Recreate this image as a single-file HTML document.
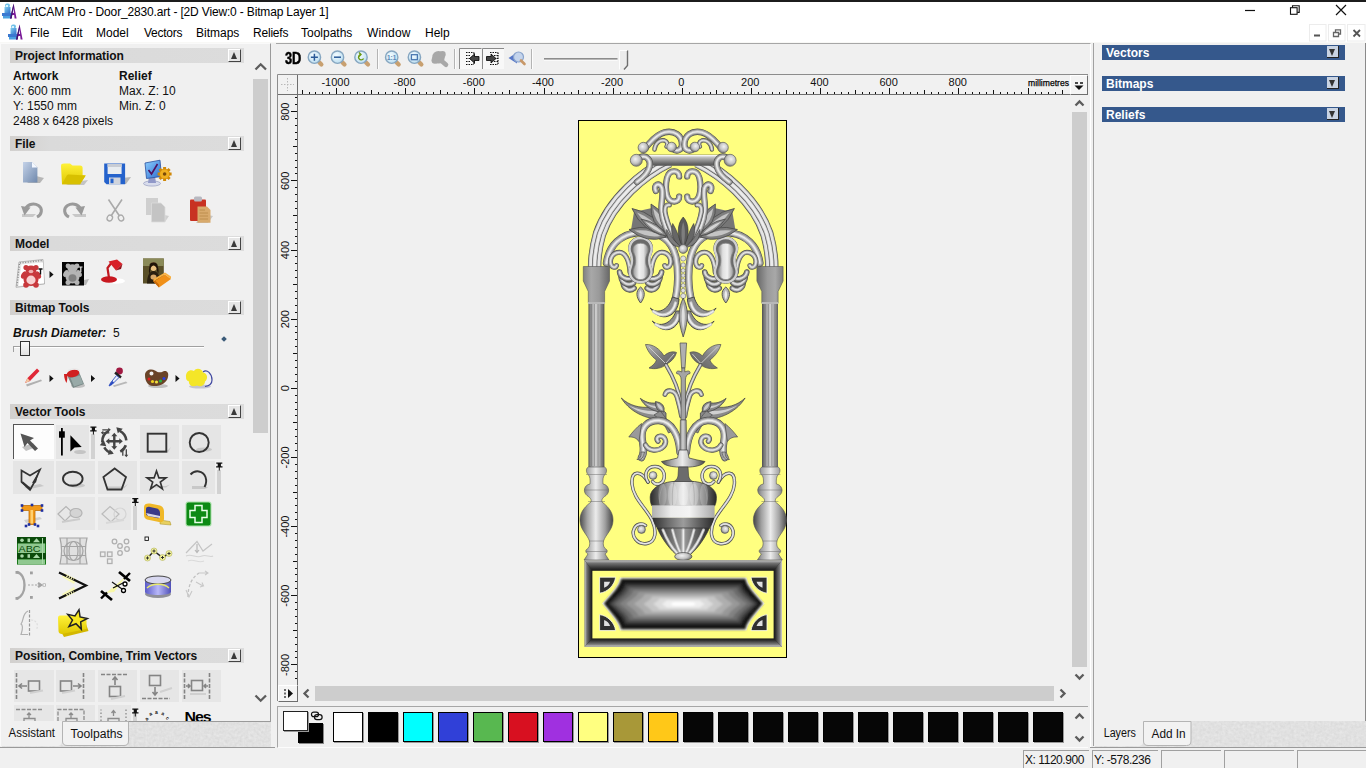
<!DOCTYPE html>
<html>
<head>
<meta charset="utf-8">
<title>ArtCAM Pro - Door_2830.art</title>
<style>
html,body{margin:0;padding:0;}
body{width:1366px;height:768px;overflow:hidden;background:#f0f0f0;position:relative;font-family:"Liberation Sans",Arial,sans-serif;font-size:12px;color:#111;}
.abs{position:absolute;}
svg{position:absolute;overflow:visible;}
#topline{left:0;top:0;width:1366px;height:2px;background:#1c1c1c;}
#titlebar{left:0;top:2px;width:1366px;height:21px;background:#fff;}
#menubar{left:0;top:23px;width:1366px;height:20px;background:#fff;}
.title{left:23px;top:5px;font-size:12px;letter-spacing:-0.16px;color:#000;white-space:pre;}
.menu{top:26px;font-size:12px;color:#000;white-space:pre;}
/* left panel */
#leftpanel{left:0;top:43px;width:271px;height:703px;background:#f0f0f0;border-right:1px solid #9a9a9a;border-top:1px solid #fafafa;border-left:1px solid #fafafa;box-sizing:border-box;}
.sechead{left:10px;width:234px;height:15px;background:linear-gradient(90deg,#d2d0ce 0,#dadada 40px,#dcdcdc 100%);}
.sechead b{position:absolute;left:5px;top:1px;letter-spacing:-0.06px;font-size:12px;line-height:14px;color:#111;white-space:pre;}
.sechead i{position:absolute;right:3px;top:1px;width:13px;height:13px;background:#e6e6e6;border-right:1px solid #444;border-bottom:1px solid #444;border-left:1px solid #fff;border-top:1px solid #fff;box-sizing:border-box;}
.sechead i:after{content:"";position:absolute;left:2px;top:2px;border-left:3.5px solid transparent;border-right:3.5px solid transparent;border-bottom:7px solid #3a3a3a;}
.t{white-space:pre;line-height:15px;font-size:12px;color:#111;}
.sb{background:#cdcdcd;}
.chev{stroke:#5c5c5c;stroke-width:2.3;fill:none;}
/* view */
#viewframe{left:276px;top:43px;width:815px;height:704px;background:#f0f0f0;border-top:1px solid #a6a6a6;border-right:1px solid #fff;box-sizing:border-box;}
/* right panel */
#rightpanel{left:1093px;top:43px;width:273px;height:703px;background:#f0f0f0;border-left:1px solid #a0a0a0;box-sizing:border-box;}
.rbar{left:1102px;width:243px;height:15px;background:#35588c;}
.rbar b{position:absolute;left:4px;top:1px;line-height:15px;font-size:12px;color:#fff;}
.rbar i{position:absolute;right:6px;top:1px;width:12px;height:12px;background:#c9d3e2;border-right:1px solid #222;border-bottom:1px solid #222;box-sizing:border-box;}
.rbar i:after{content:"";position:absolute;left:2px;top:3px;border-left:3.5px solid transparent;border-right:3.5px solid transparent;border-top:7px solid #333;}
.sw{top:712px;width:30px;height:30px;border:1px solid #000;box-sizing:border-box;box-shadow:1px 1px 0 #999;}
.stbox{top:750px;height:18px;border-left:1px solid #a0a0a0;border-top:1px solid #a0a0a0;box-sizing:border-box;font-size:12px;line-height:18px;padding-left:1px;white-space:pre;color:#111;letter-spacing:-0.45px;}
.tabbg{background:#dcdcdc;}
</style>
</head>
<body>
<div class="abs" id="titlebar"></div>
<div class="abs" id="menubar"></div>
<div class="abs" id="topline"></div>
<!-- app icons -->
<svg style="left:1.400px;top:3px" width="16" height="17" viewBox="0 0 16 17"><use href="#appicon"/></svg>
<svg width="0" height="0" style="left:0;top:0"><defs>
<linearGradient id="gApp" x1="0" y1="0" x2="1" y2="1"><stop offset="0" stop-color="#7fd0f0"/><stop offset="1" stop-color="#2a68c8"/></linearGradient>
<g id="appicon">
<rect x="4" y="0.5" width="5" height="4" rx="2" fill="#6fc0e8"/>
<rect x="3.5" y="4" width="6" height="7" fill="url(#gApp)"/>
<rect x="1" y="10" width="9" height="3" fill="#3a78d0"/>
<rect x="2" y="13" width="8" height="2.5" fill="#4aa0e0"/>
<rect x="5" y="2" width="2" height="2" fill="#d8f4ff"/>
<path d="M9 15.5 L12.6 0.5 L15.6 15.5 L13.6 15.5 L13.2 12 L11.2 12 L10.8 15.5 Z M11.6 10 L13 10 L12.4 5 Z" fill="#7a1a98" fill-rule="evenodd"/>
<path d="M9 15.5 L12.6 0.5 L12.8 4 L10.6 15.5 Z" fill="#3a1a70"/>
</g></defs></svg>
<svg style="left:6.600px;top:24px" width="16" height="17" viewBox="0 0 16 17"><use href="#appicon"/></svg>
<div class="abs title">ArtCAM Pro - Door_2830.art - [2D View:0 - Bitmap Layer 1]</div>
<div class="abs menu" style="left:30px">File</div>
<div class="abs menu" style="left:62px">Edit</div>
<div class="abs menu" style="left:96px">Model</div>
<div class="abs menu" style="left:144px;letter-spacing:-0.25px">Vectors</div>
<div class="abs menu" style="left:196px">Bitmaps</div>
<div class="abs menu" style="left:253px;letter-spacing:-0.2px">Reliefs</div>
<div class="abs menu" style="left:301px">Toolpaths</div>
<div class="abs menu" style="left:367px;letter-spacing:0.15px">Window</div>
<div class="abs menu" style="left:425px">Help</div>
<!-- window controls -->
<svg style="left:1240px;top:3px" width="126" height="40" viewBox="1240 3 126 40">
<path d="M1245 10.5H1255" stroke="#111" stroke-width="1.2"/>
<rect x="1290.5" y="7.7" width="6.6" height="6.6" fill="#fff" stroke="#111" stroke-width="1.1"/>
<path d="M1292.5 7.5V5.7H1299.2V12.4H1297.3" fill="none" stroke="#111" stroke-width="1.1"/>
<path d="M1336 5L1346 15M1346 5L1336 15" stroke="#111" stroke-width="1.2"/>
<rect x="1309.5" y="24.5" width="16.5" height="16.5" fill="#fff" stroke="#ececec"/>
<rect x="1328.5" y="24.5" width="16.5" height="16.5" fill="#fff" stroke="#ececec"/>
<rect x="1347.5" y="24.5" width="17.5" height="16.5" fill="#fff" stroke="#ececec"/>
<rect x="1314" y="34.5" width="6" height="2" fill="#555"/>
<path d="M1333.5 32.5H1338.5V36.5H1333.5Z M1335.5 32V29.8H1340.5V34H1339" fill="none" stroke="#666" stroke-width="1.3"/>
<path d="M1353.5 30L1360 36.5M1360 30L1353.5 36.5" stroke="#555" stroke-width="1.8"/>
</svg>
<div class="abs" style="left:0;top:42px;width:1366px;height:1px;background:#f8f8f6"></div>
<!-- LEFT PANEL -->
<div class="abs" id="leftpanel"></div>
<div class="abs sechead" style="top:48px"><b>Project Information</b><i></i></div>
<div class="abs t" style="left:13px;top:69px"><b>Artwork</b></div>
<div class="abs t" style="left:119px;top:69px"><b>Relief</b></div>
<div class="abs t" style="left:13px;top:84px">X: 600 mm</div>
<div class="abs t" style="left:119px;top:84px">Max. Z: 10</div>
<div class="abs t" style="left:13px;top:99px">Y: 1550 mm</div>
<div class="abs t" style="left:119px;top:99px">Min. Z: 0</div>
<div class="abs t" style="left:13px;top:114px">2488 x 6428 pixels</div>
<div class="abs sechead" style="top:136px"><b>File</b><i></i></div>
<div class="abs sechead" style="top:236px"><b>Model</b><i></i></div>
<div class="abs sechead" style="top:300px"><b>Bitmap Tools</b><i></i></div>
<div class="abs t" style="left:13px;top:326px"><b><i>Brush Diameter:</i></b>  5</div>
<div class="abs sechead" style="top:404px"><b>Vector Tools</b><i></i></div>
<div class="abs sechead" style="top:648px"><b>Position, Combine, Trim Vectors</b><i></i></div>
<!-- left scrollbar -->
<div class="abs sb" style="left:253px;top:79px;width:15px;height:354px"></div>
<svg style="left:253px;top:58px" width="16" height="16"><path class="chev" d="M2.5 11.5L7.700 6.300L13 11.500"/></svg>
<svg style="left:253px;top:690px" width="16" height="16"><path class="chev" d="M2.500 5.500L7.700 10.700L13 5.500"/></svg>
<!-- LEFT PANEL ICONS -->
<div class="abs" style="left:13px;top:424px;width:41px;height:35px;background:#fdfdfd;border-left:1px solid #555;border-top:1px solid #555;box-sizing:border-box"></div>
<div class="abs" style="left:56px;top:425px;width:33px;height:34px;background:#e5e5e5"></div>
<div class="abs" style="left:91px;top:434px;width:4px;height:25px;background:#d2d2d2"></div>
<div class="abs" style="left:140px;top:425px;width:39px;height:34px;background:#e5e5e5"></div>
<div class="abs" style="left:182px;top:425px;width:39px;height:34px;background:#e5e5e5"></div>
<div class="abs" style="left:13px;top:461px;width:41px;height:33px;background:#e5e5e5"></div>
<div class="abs" style="left:56px;top:461px;width:39px;height:33px;background:#e5e5e5"></div>
<div class="abs" style="left:98px;top:461px;width:39px;height:33px;background:#e5e5e5"></div>
<div class="abs" style="left:140px;top:461px;width:39px;height:33px;background:#e5e5e5"></div>
<div class="abs" style="left:182px;top:461px;width:33px;height:33px;background:#e5e5e5"></div>
<div class="abs" style="left:217px;top:470px;width:4px;height:24px;background:#d2d2d2"></div>
<div class="abs" style="left:56px;top:497px;width:39px;height:33px;background:#e7e7e7"></div>
<div class="abs" style="left:98px;top:497px;width:33px;height:33px;background:#e7e7e7"></div>
<div class="abs" style="left:133px;top:506px;width:4px;height:24px;background:#d2d2d2"></div>
<div class="abs" style="left:14px;top:670px;width:40px;height:32px;background:#e6e6e6"></div>
<div class="abs" style="left:56px;top:670px;width:39px;height:32px;background:#e6e6e6"></div>
<div class="abs" style="left:98px;top:670px;width:39px;height:32px;background:#e6e6e6"></div>
<div class="abs" style="left:140px;top:670px;width:39px;height:32px;background:#e6e6e6"></div>
<div class="abs" style="left:182px;top:670px;width:39px;height:32px;background:#e6e6e6"></div>
<div class="abs" style="left:14px;top:705px;width:40px;height:16px;background:#e6e6e6"></div>
<div class="abs" style="left:56px;top:705px;width:39px;height:16px;background:#e6e6e6"></div>
<div class="abs" style="left:98px;top:705px;width:33px;height:16px;background:#e6e6e6"></div>
<div class="abs" style="left:133px;top:712px;width:4px;height:9px;background:#d2d2d2"></div>
<div class="abs" style="left:13px;top:346px;width:191px;height:1px;background:#a0a0a0"></div>
<div class="abs" style="left:13px;top:347px;width:191px;height:1px;background:#fff"></div>
<div class="abs" style="left:13px;top:346px;width:1px;height:6px;background:#a0a0a0"></div>
<div class="abs" style="left:20px;top:341px;width:10px;height:15px;background:linear-gradient(#fafafa,#e2e2e2);border:1px solid #333;box-sizing:border-box"></div>
<div class="abs" style="left:222px;top:337px;width:4px;height:4px;background:#3a5a78;transform:rotate(45deg)"></div>
<svg style="left:0;top:0" width="280" height="768" viewBox="0 0 280 768" font-family="Liberation Sans, Arial, sans-serif">
<defs>
<linearGradient id="iDoc" x1="0" y1="0" x2="1" y2="1"><stop offset="0" stop-color="#c4d2e8"/><stop offset="1" stop-color="#6f88ac"/></linearGradient>
<linearGradient id="iFold" x1="0" y1="0" x2="0" y2="1"><stop offset="0" stop-color="#fff23a"/><stop offset="1" stop-color="#e0c800"/></linearGradient>
<linearGradient id="iMon" x1="0" y1="0" x2="1" y2="1"><stop offset="0" stop-color="#8fd0ff"/><stop offset="1" stop-color="#2a6ad0"/></linearGradient>
<linearGradient id="iCyl" x1="0" y1="0" x2="1" y2="0"><stop offset="0" stop-color="#5a5ac8"/><stop offset="0.5" stop-color="#b8b8f8"/><stop offset="1" stop-color="#5050b8"/></linearGradient>
<path id="pin" d="M-3 -3.5H3V-2.3H1.6V0.2H3.2V1.4H0.5V4.5H-0.5V1.4H-3.2V0.2H-1.6V-2.3H-3Z" fill="#111"/>
<path id="tri" d="M0 -4L4.5 0L0 4Z" fill="#111"/>
<ellipse id="shd" cx="0" cy="0" rx="9" ry="2.6" fill="#b8b8b8" opacity="0.8"/>
</defs>
<path d="M36 176L44 178L40 183H27Z" fill="#a8a8a8" opacity="0.8"/>
<path d="M23 162H32L37.4 167.6V182.6H23Z" fill="url(#iDoc)"/><path d="M32 162L37.4 167.6H32Z" fill="#f4f8ff"/>
<path d="M70 183L88 180L84 185H66Z" fill="#b0b0b0" opacity="0.7"/>
<path d="M61 166C61 164 62 163.4 64 163.4H70L72.5 165.5H80C82 165.5 82.6 166.5 82.6 168V175L85.7 175.5L80 184.2H62Z" fill="url(#iFold)"/><path d="M62 184.2L66.5 176C67 175 68 174.6 69 174.6L85.7 175.5L80 184.2Z" fill="#d8c000"/>
<path d="M122 178L131 177L126 184H118Z" fill="#a8a8a8" opacity="0.8"/>
<path d="M104.2 163.4H125.1V184.2H106.5L104.2 182Z" fill="#2462cc"/><rect x="107.6" y="164" width="14" height="10" fill="#e8ecf0"/><rect x="107.6" y="164" width="14" height="3" fill="#c8ccd4"/><rect x="109" y="177.5" width="11.5" height="6.7" fill="#d0d4dc"/><rect x="110.5" y="178.6" width="3" height="4.6" fill="#2462cc"/>
<ellipse cx="152" cy="183.5" rx="8.5" ry="2.6" fill="#d8dcec" stroke="#8890b8" stroke-width="0.6"/><path d="M149 176H155L156 183H148Z" fill="#9098c8"/>
<path d="M145 163L160 160.2L161.5 176.5L146.5 178.5Z" fill="url(#iMon)" stroke="#2a50a0" stroke-width="0.8"/><path d="M148.5 170L151.5 174L157.5 164" fill="none" stroke="#501060" stroke-width="1.6"/>
<g transform="translate(164.6 174)"><circle r="5.4" fill="#e8a010"/><path d="M-7 0H7M0 -7V7M-5 -5L5 5M5 -5L-5 5" stroke="#d08808" stroke-width="3"/><circle r="4.6" fill="#f0b020"/><circle r="1.8" fill="#7a4a08"/></g>
<path d="M22 214H36L33 217H22Z" fill="#c8c8c8"/>
<path d="M25.5 211.500C25 205 33 202 38.500 205.500C43 208.500 42 214.500 37 217" fill="none" stroke="#9a9a9a" stroke-width="3"/><path d="M21 206L30.500 207.500L24.500 215.500Z" fill="#9a9a9a"/>
<path d="M72 214H86L86 217H75Z" fill="#c8c8c8"/>
<path d="M80.500 211.500C81 205 73 202 67.500 205.500C63 208.500 64 214.500 69 217" fill="none" stroke="#9a9a9a" stroke-width="3"/><path d="M85 206L75.500 207.500L81.500 215.500Z" fill="#9a9a9a"/>
<path d="M108.500 199.500L119.500 216M122 199.500L111 216" stroke="#aaa" stroke-width="1.6" fill="none"/><ellipse cx="109.800" cy="218" rx="2.600" ry="3" fill="none" stroke="#aaa" stroke-width="1.300" transform="rotate(30 109.800 218)"/><ellipse cx="121" cy="218" rx="2.600" ry="3" fill="none" stroke="#aaa" stroke-width="1.300" transform="rotate(-30 121 218)"/>
<path d="M160 214L169 216L165 222H152Z" fill="#d0d0d0"/>
<rect x="146" y="198" width="12" height="17" fill="#cfcfcf"/><path d="M151.500 203H161L165 207V222H151.500Z" fill="#c4c4c4" stroke="#dcdcdc" stroke-width="0.8"/>
<path d="M203 214L213 216L208 223H196Z" fill="#c8c8c8"/>
<rect x="190" y="199.500" width="16" height="21.500" rx="1" fill="#c83222"/><rect x="194" y="196.500" width="8" height="5" rx="1.500" fill="#b8b8c0"/><path d="M197.500 206.500H207L210.500 210V222.800H197.500Z" fill="#d8aa6c"/><path d="M199.500 210H205M199.500 213H208M199.500 216H208M199.500 219H208" stroke="#b88848" stroke-width="0.8"/>
<path d="M19 262L43 259.500L44.500 284L16 287.300Z" fill="#e8e8e8" stroke="#a8a8a8" stroke-width="0.8"/><path d="M21.500 264.500L43 262.500L44 283L18.500 286Z" fill="#fff"/>
<path d="M20 263L43 260.500" stroke="#888" stroke-width="1.400" stroke-dasharray="1 1.600"/><path d="M19.500 264L17 286" stroke="#888" stroke-width="1.400" stroke-dasharray="1 1.600"/>
<g fill="#c8383c"><circle cx="26" cy="267.500" r="2.600"/><circle cx="36" cy="267.500" r="2.600"/><ellipse cx="31" cy="270" rx="5.400" ry="4.600"/><ellipse cx="31" cy="279" rx="7.600" ry="7"/><ellipse cx="24" cy="275" rx="2.600" ry="4" transform="rotate(30 24 275)"/><ellipse cx="38" cy="275" rx="2.600" ry="4" transform="rotate(-30 38 275)"/><circle cx="26" cy="285" r="2.800"/><circle cx="36" cy="285" r="2.800"/></g><ellipse cx="31" cy="280" rx="4.600" ry="4.400" fill="#f8d0d0"/><ellipse cx="31" cy="271.500" rx="2.400" ry="1.800" fill="#f0b0b0"/>
<path d="M38.500 269H42.500M40.500 269V274.500" stroke="#111" stroke-width="1.400"/>
<use href="#tri" transform="translate(49.500 274.500) scale(0.900)"/>
<path d="M84 280L89 279L86 285H80Z" fill="#b8b8b8"/>
<rect x="62" y="262" width="22" height="23.500" fill="#050505"/>
<g fill="#b4b4b4"><circle cx="68" cy="266" r="2.400"/><circle cx="77" cy="266" r="2.400"/><ellipse cx="72.500" cy="268.500" rx="5" ry="4.200"/><ellipse cx="72.500" cy="277" rx="7" ry="6.400"/><ellipse cx="66" cy="273.500" rx="2.400" ry="3.800" transform="rotate(30 66 273.500)"/><ellipse cx="79" cy="273.500" rx="2.400" ry="3.800" transform="rotate(-30 79 273.500)"/><circle cx="68" cy="282.500" r="2.500"/><circle cx="77" cy="282.500" r="2.500"/></g><ellipse cx="72.500" cy="278" rx="4" ry="3.800" fill="#808080"/>
<path d="M79 267H82.500M80.800 267V272" stroke="#e8e8e8" stroke-width="1.200"/>
<ellipse cx="116" cy="281" rx="9" ry="2.800" fill="#fff"/>
<ellipse cx="109" cy="279.500" rx="8" ry="3.200" fill="#c81820"/><path d="M109 278L107.500 268L112 262" stroke="#c01820" stroke-width="2.200" fill="none"/><path d="M108.500 261.500L117 259.500L122.500 264L116 270.500Z" fill="#d82028"/><path d="M116 270.500L122.500 264L121 269Z" fill="#901018"/>
<rect x="143" y="258.500" width="20.800" height="25" fill="#5a5028"/><path d="M143 258.500H163.800V266H143Z" fill="#8a8a58"/><path d="M147 283.500C147 275 150 271 153.500 271C157 271 160 275 160.500 283.500Z" fill="#2a2010"/><ellipse cx="153.500" cy="266.500" rx="3.600" ry="4.600" fill="#e8c080"/><path d="M149.500 266C149 261 158 261 157.800 266.500C159 270 158.500 273 158 274L156.500 268C155 264.500 152 264.500 150.800 268L149.500 274C148.500 272 149 269 149.500 266Z" fill="#201408"/><ellipse cx="153.500" cy="277" rx="3" ry="2.600" fill="#d8a868"/>
<path d="M153.500 281.500L165 274.500L171 279L159 287.500Z" fill="#f09018"/><path d="M153.500 281.500L159 287.500V284.500L153.500 279Z" fill="#c86808"/><path d="M153.500 279L165 272.500L171 276.500V279L165 274.500L153.500 281.500Z" fill="#f8b040"/>
<path d="M26 384.500L41 379.500L42 381L27 386.500Z" fill="#b0b0b0"/>
<path d="M25 383L27.500 378L37 368.500L39.500 371L30 381Z" fill="#e02838"/><path d="M25 383L27.500 378L30 381Z" fill="#f0c8a0"/>
<use href="#tri" transform="translate(49.500 378.500) scale(0.900)"/>
<ellipse cx="78" cy="385.500" rx="7" ry="2.400" fill="#c0c0c0"/>
<path d="M67 375L79 372L84 384L73 388Z" fill="#7a8a88"/><path d="M70.500 378L80 375.500L83 383.500L74 386.500Z" fill="#98aaa8"/><ellipse cx="73" cy="373.500" rx="6.400" ry="3.600" fill="#d02020" transform="rotate(-14 73 373.500)"/><path d="M64 374C64 378 65.500 381.500 66.500 383C67.500 380 67.500 377 67 374Z" fill="#d02020"/><path d="M68 370.500C72 368 78 368.500 80 371" stroke="#e8e8e8" stroke-width="1" fill="none"/>
<use href="#tri" transform="translate(91 378.500) scale(0.900)"/>
<path d="M113 385.500L126 381.500L127.500 383L114 387Z" fill="#b8b8b8"/>
<circle cx="119.500" cy="371" r="3.400" fill="#a01840"/><path d="M115 372.500L121 377.500" stroke="#222" stroke-width="2.400"/><path d="M116.500 375.500L110.500 383L109 386L112 384.500L119 377.500Z" fill="#e8eef8" stroke="#3050c0" stroke-width="0.900"/><path d="M112.500 381L110.500 383L109 386L112 384.500L114 382.500Z" fill="#2848c0"/>
<ellipse cx="158" cy="386" rx="10" ry="2" fill="#c0c0c0"/>
<path d="M145 375C145 370 151 368 155 370.500C158 372.500 160 373 163 371.500C167 370 169 373 168 377C167 383 160 386.500 153 386C147.500 385.500 145 381 145 375ZM149.500 373.500A2 2 0 1 0 153.500 373.500A2 2 0 1 0 149.500 373.500Z" fill="#6a4428" fill-rule="evenodd"/><circle cx="149" cy="379" r="1.500" fill="#e02020"/><circle cx="152.500" cy="381.500" r="1.600" fill="#f0d020"/><circle cx="156.500" cy="382" r="1.600" fill="#f0e040"/><circle cx="160.500" cy="381" r="1.600" fill="#28b040"/><circle cx="164" cy="378.500" r="1.600" fill="#2840e0"/>
<use href="#tri" transform="translate(175.500 378.500) scale(0.900)"/>
<ellipse cx="200" cy="386.500" rx="11" ry="2" fill="#c4c4d0"/>
<path d="M203 372C207 368.500 212 374 212 380C212 384 208 386 205 386.500" fill="none" stroke="#4048a0" stroke-width="1.200"/>
<path d="M186 377C185.500 372 190 369 194 371C196 367.500 202 368.500 203 372.500C207.500 373 208.500 379 205 381.500C205 385.500 200 387.500 197 385.500C193 387.500 188.500 385.500 189 381.500C186.500 381 186 379 186 377Z" fill="#f4e628"/>
<path d="M22 447L33 443L36 447L26 451Z" fill="#c0c0c0"/>
<path d="M20.500 433.500L34 438L30 440.500L38 448.500L35 451L27.500 443L24.500 447Z" fill="#555"/>
<path d="M61.900 428V455.500" stroke="#000" stroke-width="1.800"/><rect x="59" y="431.300" width="5.800" height="6.400" fill="#000"/>
<ellipse cx="80" cy="452" rx="6" ry="2" fill="#c4c4c4"/><path d="M70.400 435.300V451.600L74.600 447.600L81.700 447Z" fill="#000"/>
<use href="#pin" transform="translate(93.400 430)"/>
<g transform="translate(114.300 441.300)" fill="none" stroke="#444" stroke-width="2.600"><path d="M-5.500 -10.500A12 12 0 0 0 -12 1" /><path d="M12 -1A12 12 0 0 0 5.500 -10.500" /><path d="M-10 6A12 12 0 0 0 -2 11.800"/><path d="M6 10.400A12 12 0 0 0 11.500 4"/></g>
<g transform="translate(114.300 441.300)" fill="#444"><path d="M0 -8.500L3 -5H1.200V-1.200H5V-3L8.500 0L5 3V1.200H1.200V5H3L0 8.500L-3 5H-1.200V1.200H-5V3L-8.500 0L-5 -3V-1.200H-1.200V-5H-3Z"/><path d="M-14.500 4L-10.500 -1L-8 5Z"/><path d="M2 -14L8.500 -12.500L3.500 -8Z"/><path d="M-6.500 13.500L-4.500 8L-0.500 12.500Z"/><path d="M-12 -8.500H-5M-12 -11.500H-5" stroke="#444" stroke-width="1.300"/><path d="M8.500 8V14.500M12 8V14.500" stroke="#444" stroke-width="1.300"/><path d="M-6 -13.500L-3.500 -11.500L-6 -9.500ZM-11 -10.500L-13.500 -8.500L-11 -6.500Z"/><path d="M6.500 9L8.500 6.500L10.500 9ZM10 13.500L12 16L14 13.500Z"/></g>
<path d="M150 450H168L171 447L168 452.500H150Z" fill="#c8c8c8"/><rect x="147.700" y="433.700" width="18.600" height="18" fill="none" stroke="#333" stroke-width="1.900"/>
<ellipse cx="204" cy="449.500" rx="8" ry="2" fill="#c8c8c8"/><circle cx="199.200" cy="442.500" r="9.500" fill="none" stroke="#333" stroke-width="1.900"/>
<path d="M24 487L40 484L44 486L28 489.500Z" fill="#c8c8c8"/>
<path d="M21.500 470.500L30 475.500L40 469.500L34.500 482L30 490L21.500 482Z" fill="none" stroke="#333" stroke-width="1.700" stroke-linejoin="miter"/><path d="M32 483L38.500 472L36 482.500Z" fill="#333"/><path d="M22 482L31 489.500" stroke="#333" stroke-width="2.200"/>
<ellipse cx="77" cy="485.500" rx="8" ry="2" fill="#c8c8c8"/><ellipse cx="72.800" cy="478.800" rx="9.800" ry="7" fill="none" stroke="#333" stroke-width="1.900"/>
<path d="M106 486.500H124L128 484L124 488.500H106Z" fill="#c8c8c8"/><path d="M114.700 468.500L126 477L121.500 489.500H107.500L103.400 477Z" fill="none" stroke="#333" stroke-width="1.800"/>
<path d="M150 486H166L170 484.500L166 487.500H150Z" fill="#c8c8c8"/><path d="M156.500 469.500L159.300 477.500H167.500L160.900 482.300L163.400 490.300L156.500 485.400L149.600 490.300L152.100 482.300L145.500 477.500H153.700Z" fill="none" stroke="#333" stroke-width="1.900" stroke-linejoin="miter" transform="translate(156.500 480.400) scale(0.860) translate(-156.500 -480.400)"/>
<path d="M192 486H205L208 487.500L205 489H192Z" fill="#c8c8c8"/><path d="M190.500 474.500C195 469.500 203 470.500 205.500 477C206.800 481 206 484.500 204.500 487" fill="none" stroke="#333" stroke-width="1.900"/>
<use href="#pin" transform="translate(219.300 466)"/>
<path d="M24 520L40 517L42 519L26 523Z" fill="#d0d0d0"/>
<path d="M22 505.500H42V510.500H35V524.500H29V510.500H22Z" fill="#f09818" stroke="#c07008" stroke-width="0.800"/><path d="M30.500 510H33V523.500H30.500Z" fill="#ffd070"/>
<rect x="20.7" y="504.2" width="2.600" height="2.600" fill="#2030a0"/>
<rect x="40.7" y="504.2" width="2.600" height="2.600" fill="#2030a0"/>
<rect x="20.7" y="509.2" width="2.600" height="2.600" fill="#2030a0"/>
<rect x="40.7" y="509.2" width="2.600" height="2.600" fill="#2030a0"/>
<rect x="27.7" y="523.2" width="2.600" height="2.600" fill="#2030a0"/>
<rect x="33.7" y="523.2" width="2.600" height="2.600" fill="#2030a0"/>
<rect x="30.7" y="503.7" width="2.600" height="2.600" fill="#2030a0"/>
<rect x="24.7" y="524.7" width="2.600" height="2.600" fill="#2030a0"/>
<rect x="36.7" y="524.7" width="2.600" height="2.600" fill="#2030a0"/>
<g stroke="#b4b4b4" fill="none" stroke-width="1.200"><path d="M58 514L66 506.500L73 513L65 521Z"/><ellipse cx="76" cy="513" rx="6" ry="4.500" fill="#d4d4d4"/><path d="M62 522L80 519" stroke="#ccc" stroke-width="2"/></g>
<g stroke="#bcbcbc" fill="none" stroke-width="1.200"><path d="M102 514L110 506.500L119 514L111 522Z"/><ellipse cx="120" cy="514" rx="6" ry="6" stroke="#d4d4d4"/><path d="M106 523L124 520" stroke="#d8d8d8" stroke-width="2"/></g>
<use href="#pin" transform="translate(135.300 501.500)"/>
<path d="M160 520L170 521.500L171 525L160 524Z" fill="#e8d060" stroke="#a89020" stroke-width="0.500"/><path d="M144 507C144 504 147 503 150 503.500L160 505.500C163 506.500 164 509 164 512V519C164 521.500 162 522.500 159 522L147 519.500C145 519 144 517 144 515Z" fill="#f0b828"/><path d="M146 509C146 507 148 506.500 150 507L157 508.500C159 509 160 511 160 513V516C160 518 159 518.500 157 518L148 516C146.500 515.500 146 514.500 146 513Z" fill="#3a3a88"/><path d="M146 513L160 516V518L148 516Z" fill="#d8d8e8"/>
<rect x="185.500" y="501.500" width="26" height="25" rx="2.500" fill="#a8e0a8"/><rect x="186.500" y="502.500" width="24" height="23" rx="2" fill="#0c8a14"/><path d="M195 505.500H202V510.500H207V517.500H202V522.500H195V517.500H190V510.500H195Z" fill="none" stroke="#e8ffe8" stroke-width="1.500"/>
<rect x="17" y="537" width="29" height="27.600" fill="#187818"/><rect x="17" y="537" width="29" height="6.500" fill="#0a4a0a"/><rect x="17" y="553" width="29" height="6" fill="#0a4a0a"/><rect x="18" y="543.500" width="27" height="9.500" fill="#90c890"/><rect x="18" y="559.500" width="27" height="5" fill="#90c890"/><text x="18.500" y="552.300" font-size="9.500" fill="#0a4a0a" textLength="22" lengthAdjust="spacingAndGlyphs">ABC</text><circle cx="22" cy="540.300" r="1.800" fill="#a8d8a8"/><rect x="27.500" y="538.500" width="2.500" height="3.600" fill="#a8d8a8"/><path d="M33 542.300L36.500 538.300L40 542.300Z" fill="#a8d8a8"/><circle cx="22" cy="556" r="1.800" fill="#a8d8a8"/><rect x="27.500" y="554.200" width="2.500" height="3.600" fill="#a8d8a8"/><path d="M33 558L36.500 554L40 558Z" fill="#a8d8a8"/><path d="M42.500 538V564" stroke="#a8d8a8" stroke-width="1"/>
<g fill="none" stroke="#a4a4a4" stroke-width="1.200"><path d="M60 538H87C85 546 85 555 87 564H60C62 555 62 546 60 538Z" fill="#e0e0e0"/><circle cx="73.500" cy="551" r="9.500"/><ellipse cx="73.500" cy="551" rx="4.500" ry="9.500"/><path d="M61 546.500H86M61 555.500H86M67 538V564M80 538V564"/></g>
<g fill="none" stroke="#b0b0b0" stroke-width="1.300"><rect x="100.500" y="552" width="4.500" height="4.500"/><rect x="107.500" y="552" width="4.500" height="4.500"/><rect x="107.500" y="559" width="4.500" height="4.500"/><circle cx="114.500" cy="541.500" r="2.300"/><circle cx="120" cy="546" r="2.300"/><circle cx="126.500" cy="541.500" r="2.300"/><circle cx="120" cy="553" r="2.300"/><circle cx="127" cy="549" r="2.300"/></g>
<rect x="145" y="537" width="3.400" height="3.400" fill="#fff" stroke="#111" stroke-width="0.900"/><path d="M147.500 558L154 551L162.500 557.500L169 553.500" fill="none" stroke="#222" stroke-width="1.500"/><path d="M160 556L162.500 560L165 556Z" fill="#222"/>
<circle cx="147.5" cy="558" r="3" fill="#f4f4a0" stroke="#a0a040" stroke-width="0.500"/><path d="M145.9 558H149.1M147.5 556.4V559.6" stroke="#222" stroke-width="0.900"/>
<circle cx="154" cy="551" r="3" fill="#f4f4a0" stroke="#a0a040" stroke-width="0.500"/><path d="M152.4 551H155.6M154 549.4V552.6" stroke="#222" stroke-width="0.900"/>
<circle cx="162.5" cy="557.5" r="3" fill="#f4f4a0" stroke="#a0a040" stroke-width="0.500"/><path d="M160.9 557.5H164.1M162.5 555.9V559.1" stroke="#222" stroke-width="0.900"/>
<circle cx="169" cy="553.5" r="3" fill="#f4f4a0" stroke="#a0a040" stroke-width="0.500"/><path d="M167.4 553.5H170.6M169 551.9V555.1" stroke="#222" stroke-width="0.900"/>
<g fill="none" stroke="#c4c4c4" stroke-width="1.200"><path d="M186 553L197 541.500L203 551L212 544"/><path d="M186 556C192 553 196 559 202 556C206 554 210 558 213 556" stroke="#d4d4d4"/><path d="M188 561C194 558 198 564 204 561" stroke="#dadada"/><path d="M197 544V552M195 550L197 552.500L199 550" stroke="#b8b8b8"/></g>
<g fill="none" stroke="#a4a4a4" stroke-width="2.400"><path d="M17 572C27 575 27 595 17 598.500"/><path d="M28 585H40" stroke-width="1" stroke-dasharray="2 1.500"/><path d="M38 583L41 585L38 587"/></g><g fill="#a0a0a0"><rect x="15.500" y="571" width="2.800" height="2.800"/><rect x="15.500" y="597" width="2.800" height="2.800"/><rect x="30" y="571.500" width="2.800" height="2.800"/><rect x="30" y="596" width="2.800" height="2.800"/><rect x="43" y="583.800" width="2.400" height="2.400" fill="#fff" stroke="#a0a0a0" stroke-width="0.700"/></g>
<path d="M64 573L76 579L74 584L62 577ZM64 598L76 592L74 587L62 594Z" fill="#fafab4" opacity="0.900"/><path d="M59 572.500L86 585.500L59 598.500" fill="none" stroke="#111" stroke-width="2.200"/><path d="M66.500 576L73.500 579.500M66.500 595L73.500 591.500" stroke="#fafab8" stroke-width="2.400" stroke-dasharray="1.200 1.200"/>
<path d="M106 593L124 578L128 574L114 592Z" fill="#f8f8a8"/><path d="M101 591L112 600M119 572L130 581" stroke="#000" stroke-width="2.800"/><path d="M101 598.500L107 592.500M124 579L130 573" stroke="#000" stroke-width="2.400"/><path d="M112 582L122 589M113 588L123 583" stroke="#111" stroke-width="1.200"/><circle cx="123.500" cy="590.500" r="2" fill="#fff" stroke="#000" stroke-width="1.300"/><circle cx="125" cy="584" r="2" fill="#fff" stroke="#000" stroke-width="1.300"/>
<ellipse cx="158" cy="594" rx="13" ry="4" fill="#909098"/><path d="M145 580V592C145 596 171 596 171 592V580Z" fill="url(#iCyl)"/><ellipse cx="158" cy="580" rx="13" ry="4" fill="#d8d8f0" stroke="#444" stroke-width="1"/><path d="M147 588C152 583 164 583 169 588" fill="none" stroke="#e8e870" stroke-width="1.400"/>
<g fill="none" stroke="#c0c0c0" stroke-width="1.300" stroke-dasharray="3 2"><path d="M188 597C188 585 192 578 199 573"/></g><g fill="none" stroke="#c8c8c8" stroke-width="1.100"><path d="M199 573H208M205 571L208 573L205 575"/><path d="M196 582L203 586M200 587L203.500 586L202 582.500"/><path d="M186 590L189 597L192 591"/></g>
<g fill="none" stroke="#b0b0b0" stroke-width="1.200"><path d="M28 611C22 614 24 620 21 624C24 626 22 631 21 634.500H28"/><path d="M29.500 610V636" stroke-dasharray="3 1.500" stroke="#999"/><path d="M31 620C37 620 39 626 36 630" stroke="#dcdcdc" stroke-dasharray="2 1.500"/></g>
<path d="M60 630L86 624L88.500 631L64 637Z" fill="#d4b800"/><path d="M58 618C58 616 59 615.500 61 615.500H68L70 618H84C86 618 86.500 619 86.500 621V629L62 634C60 634 58.500 633 58.500 631Z" fill="url(#iFold)"/><path d="M77 609.500L79.600 616.400H87L81.200 621L83.300 628L77 623.800L70.700 628L72.800 621L67 616.400H74.400Z" fill="#f8e820" stroke="#222" stroke-width="1.500" stroke-linejoin="miter" transform="rotate(12 77 619)"/>
<g fill="none" stroke="#848484" stroke-width="1.600"><path d="M16.500 673V700" stroke-dasharray="4 1.500"/><rect x="28.500" y="681" width="11" height="10"/><path d="M19 686H27M22 683.500L19 686L22 688.500" /><path d="M30 693L43 690.500" stroke="#d0d0d0" stroke-width="2"/></g>
<g fill="none" stroke="#848484" stroke-width="1.600"><path d="M83.500 673V700" stroke-dasharray="4 1.500"/><rect x="60.500" y="681" width="11" height="10"/><path d="M73 686H81M78 683.500L81 686L78 688.500"/><path d="M62 693L75 690.500" stroke="#d0d0d0" stroke-width="2"/></g>
<g fill="none" stroke="#848484" stroke-width="1.600"><path d="M101 674.500H127" stroke-dasharray="4 1.500"/><rect x="109.500" y="686.500" width="11" height="10"/><path d="M115 677V685M112.500 680L115 677L117.500 680"/><path d="M111 699L125 696" stroke="#d0d0d0" stroke-width="2"/></g>
<g fill="none" stroke="#848484" stroke-width="1.600"><path d="M142 698.500H170" stroke-dasharray="4 1.500"/><rect x="149.500" y="675.500" width="11" height="10"/><path d="M155 687V695M152.500 692L155 695L157.500 692"/><path d="M160 692L172 688" stroke="#d0d0d0" stroke-width="2"/></g>
<g fill="none" stroke="#848484" stroke-width="1.600"><path d="M184.500 673V700M209.500 673V700" stroke-dasharray="4 1.500"/><rect x="191.500" y="680.500" width="11" height="10"/><path d="M186 686H190M188 684L190 686L188 688M208 686H204M206 684L204 686L206 688"/><path d="M190 694H206" stroke="#d0d0d0" stroke-width="2"/></g>
<g fill="none" stroke="#8c8c8c" stroke-width="1.300"><path d="M16 709.500H42" stroke-dasharray="4 1.500"/><path d="M29 713V718M27 715L29 713L31 715"/><path d="M24 721V718.500H35V721"/><path d="M58 721V709.500H84V721" stroke-dasharray="4 1.500"/><path d="M71 713V718M69 715L71 713L73 715"/><path d="M66 721V718.500H77V721"/><path d="M101 721V709.500M126 709.500V721" stroke-dasharray="1.500 2"/><path d="M113.500 710.500V716M111.500 713L113.500 710.500L115.500 713"/><path d="M108 721V718.500H119V721"/></g>
<use href="#pin" transform="translate(135.300 712)"/>
<g font-size="5" fill="#111" font-weight="bold"><text x="147" y="721" transform="rotate(-50 147 721)">a</text><text x="150" y="716" transform="rotate(-25 150 716)">a</text><text x="155" y="713.500">a</text><text x="161" y="714.500" transform="rotate(25 161 714.500)">a</text><text x="165.500" y="718" transform="rotate(55 165.500 718)">c</text></g>
<text x="184.500" y="721.500" font-size="15" font-weight="bold" fill="#000" textLength="26" lengthAdjust="spacingAndGlyphs" letter-spacing="-1">Nes</text>
<rect x="184" y="721" width="30" height="10" fill="#f0f0f0"/>
</svg>
<!-- VIEW -->
<div class="abs" id="viewframe"></div>
<div class="abs" style="left:284.5px;top:51px;font-weight:bold;font-size:16px;line-height:16px;color:#000;transform:scaleX(0.8);transform-origin:0 0;letter-spacing:-0.2px;-webkit-text-stroke:0.5px #000">3D</div>
<svg style="left:0;top:0" width="1366" height="768" viewBox="0 0 1366 768" font-family="Liberation Sans, Arial, sans-serif">
<rect x="277.5" y="74.5" width="793" height="20" fill="#f1f1f1" stroke="none"/>
<path d="M277.5 701V74.5H1088" fill="none" stroke="#8c8c8c" stroke-width="1"/>
<path d="M278 94.5H1070" stroke="#6e6e6e" stroke-width="1"/>
<path d="M297.5 75V685" stroke="#6e6e6e" stroke-width="1"/>
<path d="M302.5 94V90M309.5 94V92M315.5 94V92M322.5 94V92M329.5 94V92M336.5 94V88M343.5 94V92M350.5 94V92M357.5 94V92M364.5 94V92M371.5 94V90M378.5 94V92M385.5 94V92M392.5 94V92M398.5 94V92M405.5 94V88M412.5 94V92M419.5 94V92M426.5 94V92M433.5 94V92M440.5 94V90M447.5 94V92M454.5 94V92M461.5 94V92M468.5 94V92M474.5 94V88M481.5 94V92M488.5 94V92M495.5 94V92M502.5 94V92M509.5 94V90M516.5 94V92M523.5 94V92M530.5 94V92M537.5 94V92M544.5 94V88M551.5 94V92M557.5 94V92M564.5 94V92M571.5 94V92M578.5 94V90M585.5 94V92M592.5 94V92M599.5 94V92M606.5 94V92M613.5 94V88M620.5 94V92M627.5 94V92M634.5 94V92M640.5 94V92M647.5 94V90M654.5 94V92M661.5 94V92M668.5 94V92M675.5 94V92M682.5 94V88M689.5 94V92M696.5 94V92M703.5 94V92M710.5 94V92M716.5 94V90M723.5 94V92M730.5 94V92M737.5 94V92M744.5 94V92M751.5 94V88M758.5 94V92M765.5 94V92M772.5 94V92M779.5 94V92M786.5 94V90M793.5 94V92M799.5 94V92M806.5 94V92M813.5 94V92M820.5 94V88M827.5 94V92M834.5 94V92M841.5 94V92M848.5 94V92M855.5 94V90M862.5 94V92M869.5 94V92M875.5 94V92M882.5 94V92M889.5 94V88M896.5 94V92M903.5 94V92M910.5 94V92M917.5 94V92M924.5 94V90M931.5 94V92M938.5 94V92M945.5 94V92M952.5 94V92M958.5 94V88M965.5 94V92M972.5 94V92M979.5 94V92M986.5 94V92M993.5 94V90M1000.5 94V92M1007.5 94V92M1014.5 94V92M1021.5 94V92M1028.5 94V88M1035.5 94V92M1041.5 94V92M1048.5 94V92M1055.5 94V92M1062.5 94V90" stroke="#111" stroke-width="1" fill="none"/>
<text x="335.5" y="86" font-size="11" text-anchor="middle" fill="#111">-1000</text>
<text x="404.6" y="86" font-size="11" text-anchor="middle" fill="#111">-800</text>
<text x="473.8" y="86" font-size="11" text-anchor="middle" fill="#111">-600</text>
<text x="542.9" y="86" font-size="11" text-anchor="middle" fill="#111">-400</text>
<text x="612.1" y="86" font-size="11" text-anchor="middle" fill="#111">-200</text>
<text x="681.2" y="86" font-size="11" text-anchor="middle" fill="#111">0</text>
<text x="750.3" y="86" font-size="11" text-anchor="middle" fill="#111">200</text>
<text x="819.5" y="86" font-size="11" text-anchor="middle" fill="#111">400</text>
<text x="888.6" y="86" font-size="11" text-anchor="middle" fill="#111">600</text>
<text x="957.8" y="86" font-size="11" text-anchor="middle" fill="#111">800</text>
<text x="1069" y="86" font-size="9" text-anchor="end" fill="#000" stroke="#000" stroke-width="0.25" textLength="41" lengthAdjust="spacingAndGlyphs">millimetres</text>
<path d="M297 678.5H295M297 671.5H295M297 664.5H291M297 657.5H295M297 651.5H295M297 644.5H295M297 637.5H295M297 630.5H293M297 623.5H295M297 616.5H295M297 609.5H295M297 602.5H295M297 595.5H291M297 588.5H295M297 581.5H295M297 574.5H295M297 568.5H295M297 561.5H293M297 554.5H295M297 547.5H295M297 540.5H295M297 533.5H295M297 526.5H291M297 519.5H295M297 512.5H295M297 505.5H295M297 498.5H295M297 492.5H293M297 485.5H295M297 478.5H295M297 471.5H295M297 464.5H295M297 457.5H291M297 450.5H295M297 443.5H295M297 436.5H295M297 429.5H295M297 422.5H293M297 415.5H295M297 409.5H295M297 402.5H295M297 395.5H295M297 388.5H291M297 381.5H295M297 374.5H295M297 367.5H295M297 360.5H295M297 353.5H293M297 346.5H295M297 339.5H295M297 332.5H295M297 326.5H295M297 319.5H291M297 312.5H295M297 305.5H295M297 298.5H295M297 291.5H295M297 284.5H293M297 277.5H295M297 270.5H295M297 263.5H295M297 256.5H295M297 250.5H291M297 243.5H295M297 236.5H295M297 229.5H295M297 222.5H295M297 215.5H293M297 208.5H295M297 201.5H295M297 194.5H295M297 187.5H295M297 180.5H291M297 173.5H295M297 167.5H295M297 160.5H295M297 153.5H295M297 146.5H293M297 139.5H295M297 132.5H295M297 125.5H295M297 118.5H295M297 111.5H291M297 104.5H295M297 97.5H295" stroke="#111" stroke-width="1" fill="none"/>
<text transform="translate(289,664.9) rotate(-90)" font-size="11" text-anchor="middle" fill="#111">-800</text>
<text transform="translate(289,595.7) rotate(-90)" font-size="11" text-anchor="middle" fill="#111">-600</text>
<text transform="translate(289,526.6) rotate(-90)" font-size="11" text-anchor="middle" fill="#111">-400</text>
<text transform="translate(289,457.4) rotate(-90)" font-size="11" text-anchor="middle" fill="#111">-200</text>
<text transform="translate(289,388.3) rotate(-90)" font-size="11" text-anchor="middle" fill="#111">0</text>
<text transform="translate(289,319.2) rotate(-90)" font-size="11" text-anchor="middle" fill="#111">200</text>
<text transform="translate(289,250.0) rotate(-90)" font-size="11" text-anchor="middle" fill="#111">400</text>
<text transform="translate(289,180.9) rotate(-90)" font-size="11" text-anchor="middle" fill="#111">600</text>
<text transform="translate(289,111.7) rotate(-90)" font-size="11" text-anchor="middle" fill="#111">800</text>
<path d="M281 84.5H294M287.5 78V91" stroke="#b8b8b8" stroke-width="1" stroke-dasharray="1.5 1.5"/>
</svg>
<!-- DOOR ARTWORK -->
<svg style="left:0;top:0" width="1366" height="768" viewBox="0 0 1366 768">
<defs>
<linearGradient id="gCol" x1="0" y1="0" x2="1" y2="0"><stop offset="0" stop-color="#5a5a5a"/><stop offset="0.18" stop-color="#9a9a9a"/><stop offset="0.45" stop-color="#d2d2d2"/><stop offset="0.75" stop-color="#a0a0a0"/><stop offset="1" stop-color="#4e4e4e"/></linearGradient>
<linearGradient id="gCap" x1="0" y1="0" x2="1" y2="0"><stop offset="0" stop-color="#808080"/><stop offset="0.3" stop-color="#a8a8a8"/><stop offset="0.6" stop-color="#9a9a9a"/><stop offset="1" stop-color="#686868"/></linearGradient>
<linearGradient id="gBulb" x1="0" y1="0" x2="1" y2="0"><stop offset="0" stop-color="#4c4c4c"/><stop offset="0.22" stop-color="#a4a4a4"/><stop offset="0.48" stop-color="#ececec"/><stop offset="0.76" stop-color="#a0a0a0"/><stop offset="1" stop-color="#444"/></linearGradient>
<linearGradient id="gBar" x1="0" y1="0" x2="0" y2="1"><stop offset="0" stop-color="#e8e8e8"/><stop offset="0.3" stop-color="#b4b4b4"/><stop offset="0.8" stop-color="#6a6a6a"/><stop offset="1" stop-color="#585858"/></linearGradient>
<radialGradient id="gBall" cx="0.42" cy="0.4" r="0.6"><stop offset="0" stop-color="#f2f2f2"/><stop offset="0.6" stop-color="#c4c4c4"/><stop offset="1" stop-color="#7a7a7a"/></radialGradient>
<linearGradient id="gVase" x1="0" y1="0" x2="1" y2="0"><stop offset="0" stop-color="#2a2a2a"/><stop offset="0.16" stop-color="#6a6a6a"/><stop offset="0.32" stop-color="#bcbcbc"/><stop offset="0.5" stop-color="#ececec"/><stop offset="0.68" stop-color="#b8b8b8"/><stop offset="0.85" stop-color="#666"/><stop offset="1" stop-color="#262626"/></linearGradient>
<linearGradient id="gVaseLow" x1="0" y1="0" x2="1" y2="0"><stop offset="0" stop-color="#2e2e2e"/><stop offset="0.25" stop-color="#6a6a6a"/><stop offset="0.5" stop-color="#9c9c9c"/><stop offset="0.75" stop-color="#626262"/><stop offset="1" stop-color="#2a2a2a"/></linearGradient>
<linearGradient id="gBand" x1="0" y1="0" x2="1" y2="0"><stop offset="0" stop-color="#b0b0b0"/><stop offset="0.3" stop-color="#ececec"/><stop offset="0.6" stop-color="#f4f4f4"/><stop offset="1" stop-color="#a8a8a8"/></linearGradient>
<linearGradient id="gKey" x1="0" y1="0" x2="1" y2="0"><stop offset="0" stop-color="#9a9a9a"/><stop offset="0.4" stop-color="#f0f0f0"/><stop offset="0.7" stop-color="#e0e0e0"/><stop offset="1" stop-color="#8c8c8c"/></linearGradient>
<linearGradient id="gLeaf" x1="0" y1="0" x2="1" y2="1"><stop offset="0" stop-color="#b8b8b8"/><stop offset="0.5" stop-color="#7c7c7c"/><stop offset="1" stop-color="#5a5a5a"/></linearGradient>
<radialGradient id="gPlaque" cx="0.5" cy="0.5" r="0.5" gradientTransform="translate(0.5 0.5) scale(1 0.62) translate(-0.5 -0.5)"><stop offset="0" stop-color="#ffffff"/><stop offset="0.3" stop-color="#e4e4e4"/><stop offset="0.65" stop-color="#8e8e8e"/><stop offset="0.9" stop-color="#383838"/><stop offset="1" stop-color="#1c1c1c"/></radialGradient>
<linearGradient id="gFrT" x1="0" y1="0" x2="0" y2="1"><stop offset="0" stop-color="#c8c8c8"/><stop offset="0.3" stop-color="#707070"/><stop offset="0.8" stop-color="#2a2a2a"/><stop offset="1" stop-color="#161616"/></linearGradient>
<linearGradient id="gFrB" x1="0" y1="1" x2="0" y2="0"><stop offset="0" stop-color="#d0d0d0"/><stop offset="0.3" stop-color="#787878"/><stop offset="0.8" stop-color="#2a2a2a"/><stop offset="1" stop-color="#161616"/></linearGradient>
<linearGradient id="gFrL" x1="0" y1="0" x2="1" y2="0"><stop offset="0" stop-color="#c8c8c8"/><stop offset="0.3" stop-color="#707070"/><stop offset="0.8" stop-color="#2a2a2a"/><stop offset="1" stop-color="#161616"/></linearGradient>
<linearGradient id="gFrR" x1="1" y1="0" x2="0" y2="0"><stop offset="0" stop-color="#d0d0d0"/><stop offset="0.3" stop-color="#787878"/><stop offset="0.8" stop-color="#2a2a2a"/><stop offset="1" stop-color="#161616"/></linearGradient>
<filter id="blurP" x="-5%" y="-5%" width="110%" height="110%"><feGaussianBlur stdDeviation="0.9"/></filter>
</defs>
<rect x="578.5" y="120.5" width="208" height="537" fill="#ffff80" stroke="#000" stroke-width="1"/>
<g><path d="M669 161 C644 173 611 200 599.5 234 C595.5 248 594.6 258 594.6 267" fill="none" stroke="#505050" stroke-width="13.4" />
<path d="M669 161 C644 173 611 200 599.5 234 C595.5 248 594.6 258 594.6 267" fill="none" stroke="#b4b4b4" stroke-width="12" />
<path d="M669 161 C644 173 611 200 599.5 234 C595.5 248 594.6 258 594.6 267" fill="none" stroke="#e4e4e4" stroke-width="10.6" />
<path d="M669 161 C644 173 611 200 599.5 234 C595.5 248 594.6 258 594.6 267" fill="none" stroke="#5e5e5e" stroke-width="5.4" />
<path d="M669 161 C644 173 611 200 599.5 234 C595.5 248 594.6 258 594.6 267" fill="none" stroke="#c0c0c0" stroke-width="4.0" />
<path d="M669 161 C644 173 611 200 599.5 234 C595.5 248 594.6 258 594.6 267" fill="none" stroke="#ececec" stroke-width="2.6" /></g>
<g transform="translate(1366.4,0) scale(-1,1)"><path d="M669 161 C644 173 611 200 599.5 234 C595.5 248 594.6 258 594.6 267" fill="none" stroke="#505050" stroke-width="13.4" />
<path d="M669 161 C644 173 611 200 599.5 234 C595.5 248 594.6 258 594.6 267" fill="none" stroke="#b4b4b4" stroke-width="12" />
<path d="M669 161 C644 173 611 200 599.5 234 C595.5 248 594.6 258 594.6 267" fill="none" stroke="#e4e4e4" stroke-width="10.6" />
<path d="M669 161 C644 173 611 200 599.5 234 C595.5 248 594.6 258 594.6 267" fill="none" stroke="#5e5e5e" stroke-width="5.4" />
<path d="M669 161 C644 173 611 200 599.5 234 C595.5 248 594.6 258 594.6 267" fill="none" stroke="#c0c0c0" stroke-width="4.0" />
<path d="M669 161 C644 173 611 200 599.5 234 C595.5 248 594.6 258 594.6 267" fill="none" stroke="#ececec" stroke-width="2.6" /></g>
<path d="M646.9 155H720.3L713.6 165.4H653.5Z" fill="url(#gBar)" stroke="#555" stroke-width="0.6"/>
<path d="M647.5 155.6H719.7" stroke="#f4f4f4" stroke-width="1.2"/>
<g><path d="M640 157.5 C646.5 154.5 651 160 649.5 166.5 C648.5 172 644 177 637 182" fill="none" stroke="#505050" stroke-width="6.40" stroke-linecap="round" stroke-linejoin="round" />
<path d="M640 157.5 C646.5 154.5 651 160 649.5 166.5 C648.5 172 644 177 637 182" fill="none" stroke="#969696" stroke-width="5.20" stroke-linecap="round" stroke-linejoin="round" />
<path d="M640 157.5 C646.5 154.5 651 160 649.5 166.5 C648.5 172 644 177 637 182" fill="none" stroke="#cacaca" stroke-width="2.86" stroke-linecap="round" stroke-linejoin="round" />
<path d="M640 157.5 C646.5 154.5 651 160 649.5 166.5 C648.5 172 644 177 637 182" fill="none" stroke="#eeeeee" stroke-width="1.14" stroke-linecap="round" stroke-linejoin="round" />
<circle cx="636.3" cy="160.3" r="6" fill="url(#gBall)" stroke="#5a5a5a" stroke-width="0.7"/>
<path d="M646 147 C651 142 655 135 664.5 132.3 C674.5 130 682 135.5 682 144.5 C682 150.5 676.5 152 672.5 148.5" fill="none" stroke="#505050" stroke-width="6.40" stroke-linecap="round" stroke-linejoin="round" />
<path d="M646 147 C651 142 655 135 664.5 132.3 C674.5 130 682 135.5 682 144.5 C682 150.5 676.5 152 672.5 148.5" fill="none" stroke="#969696" stroke-width="5.20" stroke-linecap="round" stroke-linejoin="round" />
<path d="M646 147 C651 142 655 135 664.5 132.3 C674.5 130 682 135.5 682 144.5 C682 150.5 676.5 152 672.5 148.5" fill="none" stroke="#cacaca" stroke-width="2.86" stroke-linecap="round" stroke-linejoin="round" />
<path d="M646 147 C651 142 655 135 664.5 132.3 C674.5 130 682 135.5 682 144.5 C682 150.5 676.5 152 672.5 148.5" fill="none" stroke="#eeeeee" stroke-width="1.14" stroke-linecap="round" stroke-linejoin="round" />
<path d="M654.5 149.5 C655 143 660 139.5 664.5 140.5 C667.5 141.5 668 144.5 666.5 146.5" fill="none" stroke="#505050" stroke-width="4.40" stroke-linecap="round" stroke-linejoin="round" />
<path d="M654.5 149.5 C655 143 660 139.5 664.5 140.5 C667.5 141.5 668 144.5 666.5 146.5" fill="none" stroke="#969696" stroke-width="3.20" stroke-linecap="round" stroke-linejoin="round" />
<path d="M654.5 149.5 C655 143 660 139.5 664.5 140.5 C667.5 141.5 668 144.5 666.5 146.5" fill="none" stroke="#cacaca" stroke-width="1.76" stroke-linecap="round" stroke-linejoin="round" />
<path d="M654.5 149.5 C655 143 660 139.5 664.5 140.5 C667.5 141.5 668 144.5 666.5 146.5" fill="none" stroke="#eeeeee" stroke-width="0.70" stroke-linecap="round" stroke-linejoin="round" />
<circle cx="643.4" cy="147.6" r="5.3" fill="url(#gBall)" stroke="#5a5a5a" stroke-width="0.7"/>
<circle cx="671.6" cy="147" r="4.8" fill="url(#gBall)" stroke="#5a5a5a" stroke-width="0.7"/>
<path d="M583.3 266.5H609.5V281L604.6 291.5V303H588.3V291.5L583.3 281Z" fill="url(#gCap)" stroke="#555" stroke-width="0.6"/>
<rect x="588.4" y="303" width="16" height="164" fill="url(#gCol)"/>
<path d="M591.5 304V466M594.6 304V466M598 304V466M601.2 304V466" stroke="#6c6c6c" stroke-width="0.7" opacity="0.7"/>
<rect x="588" y="302" width="16.8" height="2" fill="#b8b8b8"/>
<path d="M588.4 467 H604.4 C607 468 607.3 472 605 474.5 C603 476 602.6 480 603 484 C609 485 610.5 492 606 495.5 C602 498 601.5 500 602 502 C610 508 613.4 514 613 521 C612.5 530 606 534 603.5 541 C602.8 545 603.6 548 606.5 549.5 C608 551 607 553 605 554 L609 560 H584 L588 554 C586 553 585 551 586.5 549.5 C589.4 548 590.2 545 589.5 541 C587 534 580.5 530 580 521 C579.6 514 583 508 591 502 C591.5 500 591 498 587 495.5 C582.5 492 584 485 590 484 C590.4 480 590 476 588 474.5 C585.7 472 586 468 588.4 467Z" fill="url(#gBulb)" stroke="#555" stroke-width="0.6"/>
<path d="M586 474.5H607M584 490H609M588 501.5H605M589 541H604M586 551.5H607" stroke="#6a6a6a" stroke-width="0.8" opacity="0.6"/>
<path d="M606.5 263 C609 246 620 233.5 641 232.2 C660 231.5 672 240 676 258 C678.5 270 678.5 288 674.5 302" fill="none" stroke="#505050" stroke-width="7.40" stroke-linecap="round" stroke-linejoin="round" />
<path d="M606.5 263 C609 246 620 233.5 641 232.2 C660 231.5 672 240 676 258 C678.5 270 678.5 288 674.5 302" fill="none" stroke="#969696" stroke-width="6.20" stroke-linecap="round" stroke-linejoin="round" />
<path d="M606.5 263 C609 246 620 233.5 641 232.2 C660 231.5 672 240 676 258 C678.5 270 678.5 288 674.5 302" fill="none" stroke="#cacaca" stroke-width="3.41" stroke-linecap="round" stroke-linejoin="round" />
<path d="M606.5 263 C609 246 620 233.5 641 232.2 C660 231.5 672 240 676 258 C678.5 270 678.5 288 674.5 302" fill="none" stroke="#eeeeee" stroke-width="1.36" stroke-linecap="round" stroke-linejoin="round" />
<path d="M679 299 C678 318 660 323 650.3 308 C657 314.5 668 311 672.5 297Z" fill="#8e8e8e" stroke="#4a4a4a" stroke-width="1"/>
<path d="M675.5 303 C673 314 663 318.5 653.5 311.5" fill="none" stroke="#c8c8c8" stroke-width="3.2" stroke-linecap="round"/>
<path d="M675.5 303 C673 314 663 318.5 653.5 311.5" fill="none" stroke="#efefef" stroke-width="1.3" stroke-linecap="round"/>
<path d="M681 311 C680 331 663 336 652.3 321 C659 327.5 671 325 676 311Z" fill="#8e8e8e" stroke="#4a4a4a" stroke-width="1"/>
<path d="M678.5 315 C676 326.5 666 331.5 655.8 324.5" fill="none" stroke="#c8c8c8" stroke-width="3.2" stroke-linecap="round"/>
<path d="M678.5 315 C676 326.5 666 331.5 655.8 324.5" fill="none" stroke="#efefef" stroke-width="1.3" stroke-linecap="round"/>
<path d="M630 272.5 C629.5 262 626 252.5 619.5 252.3 C613 252.2 609.3 258.5 610.8 264 C611.8 267.5 615.5 268.5 616.5 265.5" fill="none" stroke="#505050" stroke-width="5.00" stroke-linecap="round" stroke-linejoin="round" />
<path d="M630 272.5 C629.5 262 626 252.5 619.5 252.3 C613 252.2 609.3 258.5 610.8 264 C611.8 267.5 615.5 268.5 616.5 265.5" fill="none" stroke="#969696" stroke-width="3.80" stroke-linecap="round" stroke-linejoin="round" />
<path d="M630 272.5 C629.5 262 626 252.5 619.5 252.3 C613 252.2 609.3 258.5 610.8 264 C611.8 267.5 615.5 268.5 616.5 265.5" fill="none" stroke="#cacaca" stroke-width="2.09" stroke-linecap="round" stroke-linejoin="round" />
<path d="M630 272.5 C629.5 262 626 252.5 619.5 252.3 C613 252.2 609.3 258.5 610.8 264 C611.8 267.5 615.5 268.5 616.5 265.5" fill="none" stroke="#eeeeee" stroke-width="0.84" stroke-linecap="round" stroke-linejoin="round" />
<path d="M651.2 272.5 C651.7 262 655.2 252.5 661.7 252.3 C668.2 252.2 671.9 258.5 670.4 264 C669.4 267.5 665.7 268.5 664.7 265.5" fill="none" stroke="#505050" stroke-width="5.00" stroke-linecap="round" stroke-linejoin="round" />
<path d="M651.2 272.5 C651.7 262 655.2 252.5 661.7 252.3 C668.2 252.2 671.9 258.5 670.4 264 C669.4 267.5 665.7 268.5 664.7 265.5" fill="none" stroke="#969696" stroke-width="3.80" stroke-linecap="round" stroke-linejoin="round" />
<path d="M651.2 272.5 C651.7 262 655.2 252.5 661.7 252.3 C668.2 252.2 671.9 258.5 670.4 264 C669.4 267.5 665.7 268.5 664.7 265.5" fill="none" stroke="#cacaca" stroke-width="2.09" stroke-linecap="round" stroke-linejoin="round" />
<path d="M651.2 272.5 C651.7 262 655.2 252.5 661.7 252.3 C668.2 252.2 671.9 258.5 670.4 264 C669.4 267.5 665.7 268.5 664.7 265.5" fill="none" stroke="#eeeeee" stroke-width="0.84" stroke-linecap="round" stroke-linejoin="round" />
<path d="M623.2 283.0 C623.7 288.5 629.0 292.0 634.0 288.2" fill="none" stroke="#4a4a4a" stroke-width="5.60" stroke-linecap="round" stroke-linejoin="round" />
<path d="M623.2 283.0 C623.7 288.5 629.0 292.0 634.0 288.2" fill="none" stroke="#858585" stroke-width="4.40" stroke-linecap="round" stroke-linejoin="round" />
<path d="M623.2 283.0 C623.7 288.5 629.0 292.0 634.0 288.2" fill="none" stroke="#c6c6c6" stroke-width="2.42" stroke-linecap="round" stroke-linejoin="round" />
<path d="M623.2 283.0 C623.7 288.5 629.0 292.0 634.0 288.2" fill="none" stroke="#eaeaea" stroke-width="0.97" stroke-linecap="round" stroke-linejoin="round" />
<path d="M658.0 283.0 C657.5 288.5 652.2 292.0 647.2 288.2" fill="none" stroke="#4a4a4a" stroke-width="5.60" stroke-linecap="round" stroke-linejoin="round" />
<path d="M658.0 283.0 C657.5 288.5 652.2 292.0 647.2 288.2" fill="none" stroke="#858585" stroke-width="4.40" stroke-linecap="round" stroke-linejoin="round" />
<path d="M658.0 283.0 C657.5 288.5 652.2 292.0 647.2 288.2" fill="none" stroke="#c6c6c6" stroke-width="2.42" stroke-linecap="round" stroke-linejoin="round" />
<path d="M658.0 283.0 C657.5 288.5 652.2 292.0 647.2 288.2" fill="none" stroke="#eaeaea" stroke-width="0.97" stroke-linecap="round" stroke-linejoin="round" />
<path d="M621.2 277.5 C621.7 283.0 628.6 286.5 633.6 282.7" fill="none" stroke="#4a4a4a" stroke-width="5.60" stroke-linecap="round" stroke-linejoin="round" />
<path d="M621.2 277.5 C621.7 283.0 628.6 286.5 633.6 282.7" fill="none" stroke="#858585" stroke-width="4.40" stroke-linecap="round" stroke-linejoin="round" />
<path d="M621.2 277.5 C621.7 283.0 628.6 286.5 633.6 282.7" fill="none" stroke="#c6c6c6" stroke-width="2.42" stroke-linecap="round" stroke-linejoin="round" />
<path d="M621.2 277.5 C621.7 283.0 628.6 286.5 633.6 282.7" fill="none" stroke="#eaeaea" stroke-width="0.97" stroke-linecap="round" stroke-linejoin="round" />
<path d="M660.0 277.5 C659.5 283.0 652.6 286.5 647.6 282.7" fill="none" stroke="#4a4a4a" stroke-width="5.60" stroke-linecap="round" stroke-linejoin="round" />
<path d="M660.0 277.5 C659.5 283.0 652.6 286.5 647.6 282.7" fill="none" stroke="#858585" stroke-width="4.40" stroke-linecap="round" stroke-linejoin="round" />
<path d="M660.0 277.5 C659.5 283.0 652.6 286.5 647.6 282.7" fill="none" stroke="#c6c6c6" stroke-width="2.42" stroke-linecap="round" stroke-linejoin="round" />
<path d="M660.0 277.5 C659.5 283.0 652.6 286.5 647.6 282.7" fill="none" stroke="#eaeaea" stroke-width="0.97" stroke-linecap="round" stroke-linejoin="round" />
<path d="M619.6 272.0 C620.1 277.5 628.4 281.0 633.4 277.2" fill="none" stroke="#4a4a4a" stroke-width="5.60" stroke-linecap="round" stroke-linejoin="round" />
<path d="M619.6 272.0 C620.1 277.5 628.4 281.0 633.4 277.2" fill="none" stroke="#858585" stroke-width="4.40" stroke-linecap="round" stroke-linejoin="round" />
<path d="M619.6 272.0 C620.1 277.5 628.4 281.0 633.4 277.2" fill="none" stroke="#c6c6c6" stroke-width="2.42" stroke-linecap="round" stroke-linejoin="round" />
<path d="M619.6 272.0 C620.1 277.5 628.4 281.0 633.4 277.2" fill="none" stroke="#eaeaea" stroke-width="0.97" stroke-linecap="round" stroke-linejoin="round" />
<path d="M661.6 272.0 C661.1 277.5 652.8 281.0 647.8 277.2" fill="none" stroke="#4a4a4a" stroke-width="5.60" stroke-linecap="round" stroke-linejoin="round" />
<path d="M661.6 272.0 C661.1 277.5 652.8 281.0 647.8 277.2" fill="none" stroke="#858585" stroke-width="4.40" stroke-linecap="round" stroke-linejoin="round" />
<path d="M661.6 272.0 C661.1 277.5 652.8 281.0 647.8 277.2" fill="none" stroke="#c6c6c6" stroke-width="2.42" stroke-linecap="round" stroke-linejoin="round" />
<path d="M661.6 272.0 C661.1 277.5 652.8 281.0 647.8 277.2" fill="none" stroke="#eaeaea" stroke-width="0.97" stroke-linecap="round" stroke-linejoin="round" />
<path d="M640.6 287 C646 291 645 297.5 640.6 303 C636.2 297.5 635.2 291 640.6 287Z" fill="#b4b4b4" stroke="#4a4a4a" stroke-width="0.9"/>
<path d="M640.6 290 C642.6 293 642.2 297 640.6 300 C639 297 638.6 293 640.6 290Z" fill="#ececec"/>
<path d="M640.6 237 C650.5 237 654.6 246 651.6 253 C649.5 258 649.5 263 651.4 267.5 C654.6 275 650 283.2 640.6 283.2 C631.2 283.2 626.6 275 629.8 267.5 C631.7 263 631.7 258 629.6 253 C626.6 246 630.7 237 640.6 237Z" fill="#6a6a6a" stroke="#4a4a4a" stroke-width="1"/>
<path d="M640.6 237 C650.5 237 654.6 246 651.6 253 C649.5 258 649.5 263 651.4 267.5 C654.6 275 650 283.2 640.6 283.2 C631.2 283.2 626.6 275 629.8 267.5 C631.7 263 631.7 258 629.6 253 C626.6 246 630.7 237 640.6 237Z" fill="none" stroke="#d0d0d0" stroke-width="2.6" transform="translate(640.6 260) scale(0.92 0.96) translate(-640.6 -260)"/>
<path d="M640.6 243.2 C647.2 243.2 649.6 248.8 647.2 253.2 C645 257.5 645 263.5 647 267.6 C649.6 273.2 646.6 279.6 640.6 279.6 C634.6 279.6 631.6 273.2 634.2 267.6 C636.2 263.5 636.2 257.5 634 253.2 C631.6 248.8 634 243.2 640.6 243.2Z" fill="url(#gKey)" stroke="#8a8a8a" stroke-width="0.7"/>
<path d="M679.2 176.5 C679.5 170 669.5 168.5 667 178 C665.6 184 665.6 190 667 195 C669.5 204 679.5 203 679.2 196.5" fill="none" stroke="#505050" stroke-width="6.20" stroke-linecap="round" stroke-linejoin="round" />
<path d="M679.2 176.5 C679.5 170 669.5 168.5 667 178 C665.6 184 665.6 190 667 195 C669.5 204 679.5 203 679.2 196.5" fill="none" stroke="#969696" stroke-width="5.00" stroke-linecap="round" stroke-linejoin="round" />
<path d="M679.2 176.5 C679.5 170 669.5 168.5 667 178 C665.6 184 665.6 190 667 195 C669.5 204 679.5 203 679.2 196.5" fill="none" stroke="#cacaca" stroke-width="2.75" stroke-linecap="round" stroke-linejoin="round" />
<path d="M679.2 176.5 C679.5 170 669.5 168.5 667 178 C665.6 184 665.6 190 667 195 C669.5 204 679.5 203 679.2 196.5" fill="none" stroke="#eeeeee" stroke-width="1.10" stroke-linecap="round" stroke-linejoin="round" />
<path d="M634 212 L652 208 L664 226 L668 238 L640 236 L631 230Z" fill="#767676"/>
<path d="M666.0 237.0 Q651.5 222.8 629.0 229.5 Q647.2 244.4 666.0 237.0Z" fill="#7e7e7e" stroke="#484848" stroke-width="0.8"/><path d="M660.5 235.9 Q650.3 228.8 634.5 230.6 Q648.4 238.5 660.5 235.9Z" fill="#c4c4c4"/>
<path d="M665.0 235.0 Q657.7 213.7 632.0 208.5 Q642.6 232.4 665.0 235.0Z" fill="#7e7e7e" stroke="#484848" stroke-width="0.8"/><path d="M660.0 231.0 Q653.5 218.9 637.0 212.5 Q646.8 227.3 660.0 231.0Z" fill="#c4c4c4"/>
<path d="M666.0 232.0 Q668.9 214.2 651.0 204.0 Q649.6 224.6 666.0 232.0Z" fill="#7e7e7e" stroke="#484848" stroke-width="0.8"/><path d="M663.8 227.8 Q663.6 217.1 653.2 208.2 Q654.9 221.7 663.8 227.8Z" fill="#c4c4c4"/>
<path d="M667.0 236.0 Q659.1 222.5 641.0 219.0 Q651.5 234.2 667.0 236.0Z" fill="#8a8a8a" stroke="#484848" stroke-width="0.8"/><path d="M663.1 233.4 Q657.0 225.7 644.9 221.6 Q653.6 231.0 663.1 233.4Z" fill="#d4d4d4"/>
<path d="M655.8 191 C652.5 184.5 660 181.5 662 188.5 C663.6 196 660.6 203 661.6 211 C662.6 222 666.5 232 675 243" fill="none" stroke="#505050" stroke-width="6.20" stroke-linecap="round" stroke-linejoin="round" />
<path d="M655.8 191 C652.5 184.5 660 181.5 662 188.5 C663.6 196 660.6 203 661.6 211 C662.6 222 666.5 232 675 243" fill="none" stroke="#969696" stroke-width="5.00" stroke-linecap="round" stroke-linejoin="round" />
<path d="M655.8 191 C652.5 184.5 660 181.5 662 188.5 C663.6 196 660.6 203 661.6 211 C662.6 222 666.5 232 675 243" fill="none" stroke="#cacaca" stroke-width="2.75" stroke-linecap="round" stroke-linejoin="round" />
<path d="M655.8 191 C652.5 184.5 660 181.5 662 188.5 C663.6 196 660.6 203 661.6 211 C662.6 222 666.5 232 675 243" fill="none" stroke="#eeeeee" stroke-width="1.10" stroke-linecap="round" stroke-linejoin="round" />
<path d="M669.5 205 C664.5 204.2 664.2 210 666 216 C668 224 671 232 676.5 240" fill="none" stroke="#505050" stroke-width="4.80" stroke-linecap="round" stroke-linejoin="round" />
<path d="M669.5 205 C664.5 204.2 664.2 210 666 216 C668 224 671 232 676.5 240" fill="none" stroke="#969696" stroke-width="3.60" stroke-linecap="round" stroke-linejoin="round" />
<path d="M669.5 205 C664.5 204.2 664.2 210 666 216 C668 224 671 232 676.5 240" fill="none" stroke="#cacaca" stroke-width="1.98" stroke-linecap="round" stroke-linejoin="round" />
<path d="M669.5 205 C664.5 204.2 664.2 210 666 216 C668 224 671 232 676.5 240" fill="none" stroke="#eeeeee" stroke-width="0.79" stroke-linecap="round" stroke-linejoin="round" />
<path d="M645.5 344.5 C653 344 660 349 664 356 C668 352 673 351 676.5 352.5 C675 358 671 362 666.5 364 C662 368.5 655 369.5 649 368 C653 365.5 655.5 363 656.5 360 C651 356 647 350 645.5 344.5Z" fill="url(#gLeaf)" stroke="#4a4a4a" stroke-width="0.7"/>
<path d="M649 347 L665 363 M674 354 L666 363" stroke="#d0d0d0" stroke-width="0.9" fill="none"/>
<path d="M666 365 C672 375 678.5 388 680.5 402" fill="none" stroke="#505050" stroke-width="3.80" stroke-linecap="round" stroke-linejoin="round" />
<path d="M666 365 C672 375 678.5 388 680.5 402" fill="none" stroke="#969696" stroke-width="2.60" stroke-linecap="round" stroke-linejoin="round" />
<path d="M666 365 C672 375 678.5 388 680.5 402" fill="none" stroke="#cacaca" stroke-width="1.43" stroke-linecap="round" stroke-linejoin="round" />
<path d="M666 365 C672 375 678.5 388 680.5 402" fill="none" stroke="#eeeeee" stroke-width="0.57" stroke-linecap="round" stroke-linejoin="round" />
<path d="M665 394.5 C667 388.5 675 390 677 397 C679 404 680.5 410 681.5 416" fill="none" stroke="#505050" stroke-width="4.80" stroke-linecap="round" stroke-linejoin="round" />
<path d="M665 394.5 C667 388.5 675 390 677 397 C679 404 680.5 410 681.5 416" fill="none" stroke="#969696" stroke-width="3.60" stroke-linecap="round" stroke-linejoin="round" />
<path d="M665 394.5 C667 388.5 675 390 677 397 C679 404 680.5 410 681.5 416" fill="none" stroke="#cacaca" stroke-width="1.98" stroke-linecap="round" stroke-linejoin="round" />
<path d="M665 394.5 C667 388.5 675 390 677 397 C679 404 680.5 410 681.5 416" fill="none" stroke="#eeeeee" stroke-width="0.79" stroke-linecap="round" stroke-linejoin="round" />
<path d="M666 419 C651 421 631 414 621.3 398 C629 405.5 640 408.5 651 407 C657 406.5 662 409 666 413Z" fill="#8a8a8a" stroke="#484848" stroke-width="0.8"/>
<path d="M660 414.5 C649 415.5 637 412 629 405.5 C638 410 648 411.5 658 411Z" fill="#d0d0d0"/>
<path d="M660 412 C652 411 644 406 640.3 398.3 C645 402 650 403.500 655 403 C658 403 661 405 663 408Z" fill="#868686" stroke="#484848" stroke-width="0.8"/>
<path d="M657 408.500 C652 408 647.500 405.500 644.500 402.500 C649 405 653 406 657.500 406Z" fill="#cccccc"/>
<path d="M664.0 412.0 Q665.6 402.9 655.5 401.5 Q654.7 411.7 664.0 412.0Z" fill="#868686" stroke="#484848" stroke-width="0.8"/><path d="M662.7 410.4 Q662.6 405.3 656.8 403.1 Q657.7 409.3 662.7 410.4Z" fill="#cacaca"/>
<path d="M660 411 C664 415 669 422 672.5 431 L668.5 433 C665 425 660 419 654 415Z" fill="#8e8e8e" stroke="#4a4a4a" stroke-width="0.7"/>
<path d="M680 452 C679 436 672 421.5 659 420.5 C647 420 641.5 428 642 437 C642.5 445 645.5 451 641.5 457.5" fill="none" stroke="#505050" stroke-width="7.40" stroke-linecap="round" stroke-linejoin="round" />
<path d="M680 452 C679 436 672 421.5 659 420.5 C647 420 641.5 428 642 437 C642.5 445 645.5 451 641.5 457.5" fill="none" stroke="#969696" stroke-width="6.20" stroke-linecap="round" stroke-linejoin="round" />
<path d="M680 452 C679 436 672 421.5 659 420.5 C647 420 641.5 428 642 437 C642.5 445 645.5 451 641.5 457.5" fill="none" stroke="#cacaca" stroke-width="3.41" stroke-linecap="round" stroke-linejoin="round" />
<path d="M680 452 C679 436 672 421.5 659 420.5 C647 420 641.5 428 642 437 C642.5 445 645.5 451 641.5 457.5" fill="none" stroke="#eeeeee" stroke-width="1.36" stroke-linecap="round" stroke-linejoin="round" />
<path d="M645.5 445 C648.5 451 658 452 663.5 446.5 C668 441.5 664.5 435.5 659.5 436.2 C656.8 436.7 656.2 439.6 658 441.2" fill="none" stroke="#505050" stroke-width="5.20" stroke-linecap="round" stroke-linejoin="round" />
<path d="M645.5 445 C648.5 451 658 452 663.5 446.5 C668 441.5 664.5 435.5 659.5 436.2 C656.8 436.7 656.2 439.6 658 441.2" fill="none" stroke="#969696" stroke-width="4.00" stroke-linecap="round" stroke-linejoin="round" />
<path d="M645.5 445 C648.5 451 658 452 663.5 446.5 C668 441.5 664.5 435.5 659.5 436.2 C656.8 436.7 656.2 439.6 658 441.2" fill="none" stroke="#cacaca" stroke-width="2.20" stroke-linecap="round" stroke-linejoin="round" />
<path d="M645.5 445 C648.5 451 658 452 663.5 446.5 C668 441.5 664.5 435.5 659.5 436.2 C656.8 436.7 656.2 439.6 658 441.2" fill="none" stroke="#eeeeee" stroke-width="0.88" stroke-linecap="round" stroke-linejoin="round" />
<path d="M641.5 423.5 C636.5 427.5 632.5 432 628.8 437 C633 436.6 636.5 438 639 441.5 Z" fill="#9a9a9a" stroke="#4a4a4a" stroke-width="0.7"/>
<path d="M644.5 452 C644 457 641 461 636.8 459.3 C640 459 641.5 456 641 452Z" fill="#b0b0b0" stroke="#4a4a4a" stroke-width="0.7"/>
<path d="M648 482 C641 470 631 470 632 484 C633 498 646 508 652 520 C657 531 656 542 647 543.5 C637 545 631 536 634 529 C636 524 642 522.5 645.5 525.5" fill="none" stroke="#4a4a4a" stroke-width="3.4" stroke-linecap="round"/>
<path d="M648 482 C641 470 631 470 632 484 C633 498 646 508 652 520 C657 531 656 542 647 543.5 C637 545 631 536 634 529 C636 524 642 522.5 645.5 525.5" fill="none" stroke="#c4c4c4" stroke-width="2.0999999999999996" stroke-linecap="round"/>
<path d="M648 482 C641 470 631 470 632 484 C633 498 646 508 652 520 C657 531 656 542 647 543.5 C637 545 631 536 634 529 C636 524 642 522.5 645.5 525.5" fill="none" stroke="#efefef" stroke-width="0.94" stroke-linecap="round"/>
<path d="M648 482 C643 474 647 466.500 655 466.500 C662.5 466.500 666 474 663.5 480 C661.5 485 655.5 485.500 652.5 481.500" fill="none" stroke="#4a4a4a" stroke-width="3.4" stroke-linecap="round"/>
<path d="M648 482 C643 474 647 466.500 655 466.500 C662.5 466.500 666 474 663.5 480 C661.5 485 655.5 485.500 652.5 481.500" fill="none" stroke="#c4c4c4" stroke-width="2.0999999999999996" stroke-linecap="round"/>
<path d="M648 482 C643 474 647 466.500 655 466.500 C662.5 466.500 666 474 663.5 480 C661.5 485 655.5 485.500 652.5 481.500" fill="none" stroke="#efefef" stroke-width="0.94" stroke-linecap="round"/>
<circle cx="653" cy="475.5" r="3.9" fill="url(#gBall)" stroke="#5a5a5a" stroke-width="0.7"/>
<circle cx="641.5" cy="529.5" r="3.9" fill="url(#gBall)" stroke="#5a5a5a" stroke-width="0.7"/></g>
<g transform="translate(1366.4,0) scale(-1,1)"><path d="M640 157.5 C646.5 154.5 651 160 649.5 166.5 C648.5 172 644 177 637 182" fill="none" stroke="#505050" stroke-width="6.40" stroke-linecap="round" stroke-linejoin="round" />
<path d="M640 157.5 C646.5 154.5 651 160 649.5 166.5 C648.5 172 644 177 637 182" fill="none" stroke="#969696" stroke-width="5.20" stroke-linecap="round" stroke-linejoin="round" />
<path d="M640 157.5 C646.5 154.5 651 160 649.5 166.5 C648.5 172 644 177 637 182" fill="none" stroke="#cacaca" stroke-width="2.86" stroke-linecap="round" stroke-linejoin="round" />
<path d="M640 157.5 C646.5 154.5 651 160 649.5 166.5 C648.5 172 644 177 637 182" fill="none" stroke="#eeeeee" stroke-width="1.14" stroke-linecap="round" stroke-linejoin="round" />
<circle cx="636.3" cy="160.3" r="6" fill="url(#gBall)" stroke="#5a5a5a" stroke-width="0.7"/>
<path d="M646 147 C651 142 655 135 664.5 132.3 C674.5 130 682 135.5 682 144.5 C682 150.5 676.5 152 672.5 148.5" fill="none" stroke="#505050" stroke-width="6.40" stroke-linecap="round" stroke-linejoin="round" />
<path d="M646 147 C651 142 655 135 664.5 132.3 C674.5 130 682 135.5 682 144.5 C682 150.5 676.5 152 672.5 148.5" fill="none" stroke="#969696" stroke-width="5.20" stroke-linecap="round" stroke-linejoin="round" />
<path d="M646 147 C651 142 655 135 664.5 132.3 C674.5 130 682 135.5 682 144.5 C682 150.5 676.5 152 672.5 148.5" fill="none" stroke="#cacaca" stroke-width="2.86" stroke-linecap="round" stroke-linejoin="round" />
<path d="M646 147 C651 142 655 135 664.5 132.3 C674.5 130 682 135.5 682 144.5 C682 150.5 676.5 152 672.5 148.5" fill="none" stroke="#eeeeee" stroke-width="1.14" stroke-linecap="round" stroke-linejoin="round" />
<path d="M654.5 149.5 C655 143 660 139.5 664.5 140.5 C667.5 141.5 668 144.5 666.5 146.5" fill="none" stroke="#505050" stroke-width="4.40" stroke-linecap="round" stroke-linejoin="round" />
<path d="M654.5 149.5 C655 143 660 139.5 664.5 140.5 C667.5 141.5 668 144.5 666.5 146.5" fill="none" stroke="#969696" stroke-width="3.20" stroke-linecap="round" stroke-linejoin="round" />
<path d="M654.5 149.5 C655 143 660 139.5 664.5 140.5 C667.5 141.5 668 144.5 666.5 146.5" fill="none" stroke="#cacaca" stroke-width="1.76" stroke-linecap="round" stroke-linejoin="round" />
<path d="M654.5 149.5 C655 143 660 139.5 664.5 140.5 C667.5 141.5 668 144.5 666.5 146.5" fill="none" stroke="#eeeeee" stroke-width="0.70" stroke-linecap="round" stroke-linejoin="round" />
<circle cx="643.4" cy="147.6" r="5.3" fill="url(#gBall)" stroke="#5a5a5a" stroke-width="0.7"/>
<circle cx="671.6" cy="147" r="4.8" fill="url(#gBall)" stroke="#5a5a5a" stroke-width="0.7"/>
<path d="M583.3 266.5H609.5V281L604.6 291.5V303H588.3V291.5L583.3 281Z" fill="url(#gCap)" stroke="#555" stroke-width="0.6"/>
<rect x="588.4" y="303" width="16" height="164" fill="url(#gCol)"/>
<path d="M591.5 304V466M594.6 304V466M598 304V466M601.2 304V466" stroke="#6c6c6c" stroke-width="0.7" opacity="0.7"/>
<rect x="588" y="302" width="16.8" height="2" fill="#b8b8b8"/>
<path d="M588.4 467 H604.4 C607 468 607.3 472 605 474.5 C603 476 602.6 480 603 484 C609 485 610.5 492 606 495.5 C602 498 601.5 500 602 502 C610 508 613.4 514 613 521 C612.5 530 606 534 603.5 541 C602.8 545 603.6 548 606.5 549.5 C608 551 607 553 605 554 L609 560 H584 L588 554 C586 553 585 551 586.5 549.5 C589.4 548 590.2 545 589.5 541 C587 534 580.5 530 580 521 C579.6 514 583 508 591 502 C591.5 500 591 498 587 495.5 C582.5 492 584 485 590 484 C590.4 480 590 476 588 474.5 C585.7 472 586 468 588.4 467Z" fill="url(#gBulb)" stroke="#555" stroke-width="0.6"/>
<path d="M586 474.5H607M584 490H609M588 501.5H605M589 541H604M586 551.5H607" stroke="#6a6a6a" stroke-width="0.8" opacity="0.6"/>
<path d="M606.5 263 C609 246 620 233.5 641 232.2 C660 231.5 672 240 676 258 C678.5 270 678.5 288 674.5 302" fill="none" stroke="#505050" stroke-width="7.40" stroke-linecap="round" stroke-linejoin="round" />
<path d="M606.5 263 C609 246 620 233.5 641 232.2 C660 231.5 672 240 676 258 C678.5 270 678.5 288 674.5 302" fill="none" stroke="#969696" stroke-width="6.20" stroke-linecap="round" stroke-linejoin="round" />
<path d="M606.5 263 C609 246 620 233.5 641 232.2 C660 231.5 672 240 676 258 C678.5 270 678.5 288 674.5 302" fill="none" stroke="#cacaca" stroke-width="3.41" stroke-linecap="round" stroke-linejoin="round" />
<path d="M606.5 263 C609 246 620 233.5 641 232.2 C660 231.5 672 240 676 258 C678.5 270 678.5 288 674.5 302" fill="none" stroke="#eeeeee" stroke-width="1.36" stroke-linecap="round" stroke-linejoin="round" />
<path d="M679 299 C678 318 660 323 650.3 308 C657 314.5 668 311 672.5 297Z" fill="#8e8e8e" stroke="#4a4a4a" stroke-width="1"/>
<path d="M675.5 303 C673 314 663 318.5 653.5 311.5" fill="none" stroke="#c8c8c8" stroke-width="3.2" stroke-linecap="round"/>
<path d="M675.5 303 C673 314 663 318.5 653.5 311.5" fill="none" stroke="#efefef" stroke-width="1.3" stroke-linecap="round"/>
<path d="M681 311 C680 331 663 336 652.3 321 C659 327.5 671 325 676 311Z" fill="#8e8e8e" stroke="#4a4a4a" stroke-width="1"/>
<path d="M678.5 315 C676 326.5 666 331.5 655.8 324.5" fill="none" stroke="#c8c8c8" stroke-width="3.2" stroke-linecap="round"/>
<path d="M678.5 315 C676 326.5 666 331.5 655.8 324.5" fill="none" stroke="#efefef" stroke-width="1.3" stroke-linecap="round"/>
<path d="M630 272.5 C629.5 262 626 252.5 619.5 252.3 C613 252.2 609.3 258.5 610.8 264 C611.8 267.5 615.5 268.5 616.5 265.5" fill="none" stroke="#505050" stroke-width="5.00" stroke-linecap="round" stroke-linejoin="round" />
<path d="M630 272.5 C629.5 262 626 252.5 619.5 252.3 C613 252.2 609.3 258.5 610.8 264 C611.8 267.5 615.5 268.5 616.5 265.5" fill="none" stroke="#969696" stroke-width="3.80" stroke-linecap="round" stroke-linejoin="round" />
<path d="M630 272.5 C629.5 262 626 252.5 619.5 252.3 C613 252.2 609.3 258.5 610.8 264 C611.8 267.5 615.5 268.5 616.5 265.5" fill="none" stroke="#cacaca" stroke-width="2.09" stroke-linecap="round" stroke-linejoin="round" />
<path d="M630 272.5 C629.5 262 626 252.5 619.5 252.3 C613 252.2 609.3 258.5 610.8 264 C611.8 267.5 615.5 268.5 616.5 265.5" fill="none" stroke="#eeeeee" stroke-width="0.84" stroke-linecap="round" stroke-linejoin="round" />
<path d="M651.2 272.5 C651.7 262 655.2 252.5 661.7 252.3 C668.2 252.2 671.9 258.5 670.4 264 C669.4 267.5 665.7 268.5 664.7 265.5" fill="none" stroke="#505050" stroke-width="5.00" stroke-linecap="round" stroke-linejoin="round" />
<path d="M651.2 272.5 C651.7 262 655.2 252.5 661.7 252.3 C668.2 252.2 671.9 258.5 670.4 264 C669.4 267.5 665.7 268.5 664.7 265.5" fill="none" stroke="#969696" stroke-width="3.80" stroke-linecap="round" stroke-linejoin="round" />
<path d="M651.2 272.5 C651.7 262 655.2 252.5 661.7 252.3 C668.2 252.2 671.9 258.5 670.4 264 C669.4 267.5 665.7 268.5 664.7 265.5" fill="none" stroke="#cacaca" stroke-width="2.09" stroke-linecap="round" stroke-linejoin="round" />
<path d="M651.2 272.5 C651.7 262 655.2 252.5 661.7 252.3 C668.2 252.2 671.9 258.5 670.4 264 C669.4 267.5 665.7 268.5 664.7 265.5" fill="none" stroke="#eeeeee" stroke-width="0.84" stroke-linecap="round" stroke-linejoin="round" />
<path d="M623.2 283.0 C623.7 288.5 629.0 292.0 634.0 288.2" fill="none" stroke="#4a4a4a" stroke-width="5.60" stroke-linecap="round" stroke-linejoin="round" />
<path d="M623.2 283.0 C623.7 288.5 629.0 292.0 634.0 288.2" fill="none" stroke="#858585" stroke-width="4.40" stroke-linecap="round" stroke-linejoin="round" />
<path d="M623.2 283.0 C623.7 288.5 629.0 292.0 634.0 288.2" fill="none" stroke="#c6c6c6" stroke-width="2.42" stroke-linecap="round" stroke-linejoin="round" />
<path d="M623.2 283.0 C623.7 288.5 629.0 292.0 634.0 288.2" fill="none" stroke="#eaeaea" stroke-width="0.97" stroke-linecap="round" stroke-linejoin="round" />
<path d="M658.0 283.0 C657.5 288.5 652.2 292.0 647.2 288.2" fill="none" stroke="#4a4a4a" stroke-width="5.60" stroke-linecap="round" stroke-linejoin="round" />
<path d="M658.0 283.0 C657.5 288.5 652.2 292.0 647.2 288.2" fill="none" stroke="#858585" stroke-width="4.40" stroke-linecap="round" stroke-linejoin="round" />
<path d="M658.0 283.0 C657.5 288.5 652.2 292.0 647.2 288.2" fill="none" stroke="#c6c6c6" stroke-width="2.42" stroke-linecap="round" stroke-linejoin="round" />
<path d="M658.0 283.0 C657.5 288.5 652.2 292.0 647.2 288.2" fill="none" stroke="#eaeaea" stroke-width="0.97" stroke-linecap="round" stroke-linejoin="round" />
<path d="M621.2 277.5 C621.7 283.0 628.6 286.5 633.6 282.7" fill="none" stroke="#4a4a4a" stroke-width="5.60" stroke-linecap="round" stroke-linejoin="round" />
<path d="M621.2 277.5 C621.7 283.0 628.6 286.5 633.6 282.7" fill="none" stroke="#858585" stroke-width="4.40" stroke-linecap="round" stroke-linejoin="round" />
<path d="M621.2 277.5 C621.7 283.0 628.6 286.5 633.6 282.7" fill="none" stroke="#c6c6c6" stroke-width="2.42" stroke-linecap="round" stroke-linejoin="round" />
<path d="M621.2 277.5 C621.7 283.0 628.6 286.5 633.6 282.7" fill="none" stroke="#eaeaea" stroke-width="0.97" stroke-linecap="round" stroke-linejoin="round" />
<path d="M660.0 277.5 C659.5 283.0 652.6 286.5 647.6 282.7" fill="none" stroke="#4a4a4a" stroke-width="5.60" stroke-linecap="round" stroke-linejoin="round" />
<path d="M660.0 277.5 C659.5 283.0 652.6 286.5 647.6 282.7" fill="none" stroke="#858585" stroke-width="4.40" stroke-linecap="round" stroke-linejoin="round" />
<path d="M660.0 277.5 C659.5 283.0 652.6 286.5 647.6 282.7" fill="none" stroke="#c6c6c6" stroke-width="2.42" stroke-linecap="round" stroke-linejoin="round" />
<path d="M660.0 277.5 C659.5 283.0 652.6 286.5 647.6 282.7" fill="none" stroke="#eaeaea" stroke-width="0.97" stroke-linecap="round" stroke-linejoin="round" />
<path d="M619.6 272.0 C620.1 277.5 628.4 281.0 633.4 277.2" fill="none" stroke="#4a4a4a" stroke-width="5.60" stroke-linecap="round" stroke-linejoin="round" />
<path d="M619.6 272.0 C620.1 277.5 628.4 281.0 633.4 277.2" fill="none" stroke="#858585" stroke-width="4.40" stroke-linecap="round" stroke-linejoin="round" />
<path d="M619.6 272.0 C620.1 277.5 628.4 281.0 633.4 277.2" fill="none" stroke="#c6c6c6" stroke-width="2.42" stroke-linecap="round" stroke-linejoin="round" />
<path d="M619.6 272.0 C620.1 277.5 628.4 281.0 633.4 277.2" fill="none" stroke="#eaeaea" stroke-width="0.97" stroke-linecap="round" stroke-linejoin="round" />
<path d="M661.6 272.0 C661.1 277.5 652.8 281.0 647.8 277.2" fill="none" stroke="#4a4a4a" stroke-width="5.60" stroke-linecap="round" stroke-linejoin="round" />
<path d="M661.6 272.0 C661.1 277.5 652.8 281.0 647.8 277.2" fill="none" stroke="#858585" stroke-width="4.40" stroke-linecap="round" stroke-linejoin="round" />
<path d="M661.6 272.0 C661.1 277.5 652.8 281.0 647.8 277.2" fill="none" stroke="#c6c6c6" stroke-width="2.42" stroke-linecap="round" stroke-linejoin="round" />
<path d="M661.6 272.0 C661.1 277.5 652.8 281.0 647.8 277.2" fill="none" stroke="#eaeaea" stroke-width="0.97" stroke-linecap="round" stroke-linejoin="round" />
<path d="M640.6 287 C646 291 645 297.5 640.6 303 C636.2 297.5 635.2 291 640.6 287Z" fill="#b4b4b4" stroke="#4a4a4a" stroke-width="0.9"/>
<path d="M640.6 290 C642.6 293 642.2 297 640.6 300 C639 297 638.6 293 640.6 290Z" fill="#ececec"/>
<path d="M640.6 237 C650.5 237 654.6 246 651.6 253 C649.5 258 649.5 263 651.4 267.5 C654.6 275 650 283.2 640.6 283.2 C631.2 283.2 626.6 275 629.8 267.5 C631.7 263 631.7 258 629.6 253 C626.6 246 630.7 237 640.6 237Z" fill="#6a6a6a" stroke="#4a4a4a" stroke-width="1"/>
<path d="M640.6 237 C650.5 237 654.6 246 651.6 253 C649.5 258 649.5 263 651.4 267.5 C654.6 275 650 283.2 640.6 283.2 C631.2 283.2 626.6 275 629.8 267.5 C631.7 263 631.7 258 629.6 253 C626.6 246 630.7 237 640.6 237Z" fill="none" stroke="#d0d0d0" stroke-width="2.6" transform="translate(640.6 260) scale(0.92 0.96) translate(-640.6 -260)"/>
<path d="M640.6 243.2 C647.2 243.2 649.6 248.8 647.2 253.2 C645 257.5 645 263.5 647 267.6 C649.6 273.2 646.6 279.6 640.6 279.6 C634.6 279.6 631.6 273.2 634.2 267.6 C636.2 263.5 636.2 257.5 634 253.2 C631.6 248.8 634 243.2 640.6 243.2Z" fill="url(#gKey)" stroke="#8a8a8a" stroke-width="0.7"/>
<path d="M679.2 176.5 C679.5 170 669.5 168.5 667 178 C665.6 184 665.6 190 667 195 C669.5 204 679.5 203 679.2 196.5" fill="none" stroke="#505050" stroke-width="6.20" stroke-linecap="round" stroke-linejoin="round" />
<path d="M679.2 176.5 C679.5 170 669.5 168.5 667 178 C665.6 184 665.6 190 667 195 C669.5 204 679.5 203 679.2 196.5" fill="none" stroke="#969696" stroke-width="5.00" stroke-linecap="round" stroke-linejoin="round" />
<path d="M679.2 176.5 C679.5 170 669.5 168.5 667 178 C665.6 184 665.6 190 667 195 C669.5 204 679.5 203 679.2 196.5" fill="none" stroke="#cacaca" stroke-width="2.75" stroke-linecap="round" stroke-linejoin="round" />
<path d="M679.2 176.5 C679.5 170 669.5 168.5 667 178 C665.6 184 665.6 190 667 195 C669.5 204 679.5 203 679.2 196.5" fill="none" stroke="#eeeeee" stroke-width="1.10" stroke-linecap="round" stroke-linejoin="round" />
<path d="M634 212 L652 208 L664 226 L668 238 L640 236 L631 230Z" fill="#767676"/>
<path d="M666.0 237.0 Q651.5 222.8 629.0 229.5 Q647.2 244.4 666.0 237.0Z" fill="#7e7e7e" stroke="#484848" stroke-width="0.8"/><path d="M660.5 235.9 Q650.3 228.8 634.5 230.6 Q648.4 238.5 660.5 235.9Z" fill="#c4c4c4"/>
<path d="M665.0 235.0 Q657.7 213.7 632.0 208.5 Q642.6 232.4 665.0 235.0Z" fill="#7e7e7e" stroke="#484848" stroke-width="0.8"/><path d="M660.0 231.0 Q653.5 218.9 637.0 212.5 Q646.8 227.3 660.0 231.0Z" fill="#c4c4c4"/>
<path d="M666.0 232.0 Q668.9 214.2 651.0 204.0 Q649.6 224.6 666.0 232.0Z" fill="#7e7e7e" stroke="#484848" stroke-width="0.8"/><path d="M663.8 227.8 Q663.6 217.1 653.2 208.2 Q654.9 221.7 663.8 227.8Z" fill="#c4c4c4"/>
<path d="M667.0 236.0 Q659.1 222.5 641.0 219.0 Q651.5 234.2 667.0 236.0Z" fill="#8a8a8a" stroke="#484848" stroke-width="0.8"/><path d="M663.1 233.4 Q657.0 225.7 644.9 221.6 Q653.6 231.0 663.1 233.4Z" fill="#d4d4d4"/>
<path d="M655.8 191 C652.5 184.5 660 181.5 662 188.5 C663.6 196 660.6 203 661.6 211 C662.6 222 666.5 232 675 243" fill="none" stroke="#505050" stroke-width="6.20" stroke-linecap="round" stroke-linejoin="round" />
<path d="M655.8 191 C652.5 184.5 660 181.5 662 188.5 C663.6 196 660.6 203 661.6 211 C662.6 222 666.5 232 675 243" fill="none" stroke="#969696" stroke-width="5.00" stroke-linecap="round" stroke-linejoin="round" />
<path d="M655.8 191 C652.5 184.5 660 181.5 662 188.5 C663.6 196 660.6 203 661.6 211 C662.6 222 666.5 232 675 243" fill="none" stroke="#cacaca" stroke-width="2.75" stroke-linecap="round" stroke-linejoin="round" />
<path d="M655.8 191 C652.5 184.5 660 181.5 662 188.5 C663.6 196 660.6 203 661.6 211 C662.6 222 666.5 232 675 243" fill="none" stroke="#eeeeee" stroke-width="1.10" stroke-linecap="round" stroke-linejoin="round" />
<path d="M669.5 205 C664.5 204.2 664.2 210 666 216 C668 224 671 232 676.5 240" fill="none" stroke="#505050" stroke-width="4.80" stroke-linecap="round" stroke-linejoin="round" />
<path d="M669.5 205 C664.5 204.2 664.2 210 666 216 C668 224 671 232 676.5 240" fill="none" stroke="#969696" stroke-width="3.60" stroke-linecap="round" stroke-linejoin="round" />
<path d="M669.5 205 C664.5 204.2 664.2 210 666 216 C668 224 671 232 676.5 240" fill="none" stroke="#cacaca" stroke-width="1.98" stroke-linecap="round" stroke-linejoin="round" />
<path d="M669.5 205 C664.5 204.2 664.2 210 666 216 C668 224 671 232 676.5 240" fill="none" stroke="#eeeeee" stroke-width="0.79" stroke-linecap="round" stroke-linejoin="round" />
<path d="M645.5 344.5 C653 344 660 349 664 356 C668 352 673 351 676.5 352.5 C675 358 671 362 666.5 364 C662 368.5 655 369.5 649 368 C653 365.5 655.5 363 656.5 360 C651 356 647 350 645.5 344.5Z" fill="url(#gLeaf)" stroke="#4a4a4a" stroke-width="0.7"/>
<path d="M649 347 L665 363 M674 354 L666 363" stroke="#d0d0d0" stroke-width="0.9" fill="none"/>
<path d="M666 365 C672 375 678.5 388 680.5 402" fill="none" stroke="#505050" stroke-width="3.80" stroke-linecap="round" stroke-linejoin="round" />
<path d="M666 365 C672 375 678.5 388 680.5 402" fill="none" stroke="#969696" stroke-width="2.60" stroke-linecap="round" stroke-linejoin="round" />
<path d="M666 365 C672 375 678.5 388 680.5 402" fill="none" stroke="#cacaca" stroke-width="1.43" stroke-linecap="round" stroke-linejoin="round" />
<path d="M666 365 C672 375 678.5 388 680.5 402" fill="none" stroke="#eeeeee" stroke-width="0.57" stroke-linecap="round" stroke-linejoin="round" />
<path d="M665 394.5 C667 388.5 675 390 677 397 C679 404 680.5 410 681.5 416" fill="none" stroke="#505050" stroke-width="4.80" stroke-linecap="round" stroke-linejoin="round" />
<path d="M665 394.5 C667 388.5 675 390 677 397 C679 404 680.5 410 681.5 416" fill="none" stroke="#969696" stroke-width="3.60" stroke-linecap="round" stroke-linejoin="round" />
<path d="M665 394.5 C667 388.5 675 390 677 397 C679 404 680.5 410 681.5 416" fill="none" stroke="#cacaca" stroke-width="1.98" stroke-linecap="round" stroke-linejoin="round" />
<path d="M665 394.5 C667 388.5 675 390 677 397 C679 404 680.5 410 681.5 416" fill="none" stroke="#eeeeee" stroke-width="0.79" stroke-linecap="round" stroke-linejoin="round" />
<path d="M666 419 C651 421 631 414 621.3 398 C629 405.5 640 408.5 651 407 C657 406.5 662 409 666 413Z" fill="#8a8a8a" stroke="#484848" stroke-width="0.8"/>
<path d="M660 414.5 C649 415.5 637 412 629 405.5 C638 410 648 411.5 658 411Z" fill="#d0d0d0"/>
<path d="M660 412 C652 411 644 406 640.3 398.3 C645 402 650 403.500 655 403 C658 403 661 405 663 408Z" fill="#868686" stroke="#484848" stroke-width="0.8"/>
<path d="M657 408.500 C652 408 647.500 405.500 644.500 402.500 C649 405 653 406 657.500 406Z" fill="#cccccc"/>
<path d="M664.0 412.0 Q665.6 402.9 655.5 401.5 Q654.7 411.7 664.0 412.0Z" fill="#868686" stroke="#484848" stroke-width="0.8"/><path d="M662.7 410.4 Q662.6 405.3 656.8 403.1 Q657.7 409.3 662.7 410.4Z" fill="#cacaca"/>
<path d="M660 411 C664 415 669 422 672.5 431 L668.5 433 C665 425 660 419 654 415Z" fill="#8e8e8e" stroke="#4a4a4a" stroke-width="0.7"/>
<path d="M680 452 C679 436 672 421.5 659 420.5 C647 420 641.5 428 642 437 C642.5 445 645.5 451 641.5 457.5" fill="none" stroke="#505050" stroke-width="7.40" stroke-linecap="round" stroke-linejoin="round" />
<path d="M680 452 C679 436 672 421.5 659 420.5 C647 420 641.5 428 642 437 C642.5 445 645.5 451 641.5 457.5" fill="none" stroke="#969696" stroke-width="6.20" stroke-linecap="round" stroke-linejoin="round" />
<path d="M680 452 C679 436 672 421.5 659 420.5 C647 420 641.5 428 642 437 C642.5 445 645.5 451 641.5 457.5" fill="none" stroke="#cacaca" stroke-width="3.41" stroke-linecap="round" stroke-linejoin="round" />
<path d="M680 452 C679 436 672 421.5 659 420.5 C647 420 641.5 428 642 437 C642.5 445 645.5 451 641.5 457.5" fill="none" stroke="#eeeeee" stroke-width="1.36" stroke-linecap="round" stroke-linejoin="round" />
<path d="M645.5 445 C648.5 451 658 452 663.5 446.5 C668 441.5 664.5 435.5 659.5 436.2 C656.8 436.7 656.2 439.6 658 441.2" fill="none" stroke="#505050" stroke-width="5.20" stroke-linecap="round" stroke-linejoin="round" />
<path d="M645.5 445 C648.5 451 658 452 663.5 446.5 C668 441.5 664.5 435.5 659.5 436.2 C656.8 436.7 656.2 439.6 658 441.2" fill="none" stroke="#969696" stroke-width="4.00" stroke-linecap="round" stroke-linejoin="round" />
<path d="M645.5 445 C648.5 451 658 452 663.5 446.5 C668 441.5 664.5 435.5 659.5 436.2 C656.8 436.7 656.2 439.6 658 441.2" fill="none" stroke="#cacaca" stroke-width="2.20" stroke-linecap="round" stroke-linejoin="round" />
<path d="M645.5 445 C648.5 451 658 452 663.5 446.5 C668 441.5 664.5 435.5 659.5 436.2 C656.8 436.7 656.2 439.6 658 441.2" fill="none" stroke="#eeeeee" stroke-width="0.88" stroke-linecap="round" stroke-linejoin="round" />
<path d="M641.5 423.5 C636.5 427.5 632.5 432 628.8 437 C633 436.6 636.5 438 639 441.5 Z" fill="#9a9a9a" stroke="#4a4a4a" stroke-width="0.7"/>
<path d="M644.5 452 C644 457 641 461 636.8 459.3 C640 459 641.5 456 641 452Z" fill="#b0b0b0" stroke="#4a4a4a" stroke-width="0.7"/>
<path d="M648 482 C641 470 631 470 632 484 C633 498 646 508 652 520 C657 531 656 542 647 543.5 C637 545 631 536 634 529 C636 524 642 522.5 645.5 525.5" fill="none" stroke="#4a4a4a" stroke-width="3.4" stroke-linecap="round"/>
<path d="M648 482 C641 470 631 470 632 484 C633 498 646 508 652 520 C657 531 656 542 647 543.5 C637 545 631 536 634 529 C636 524 642 522.5 645.5 525.5" fill="none" stroke="#c4c4c4" stroke-width="2.0999999999999996" stroke-linecap="round"/>
<path d="M648 482 C641 470 631 470 632 484 C633 498 646 508 652 520 C657 531 656 542 647 543.5 C637 545 631 536 634 529 C636 524 642 522.5 645.5 525.5" fill="none" stroke="#efefef" stroke-width="0.94" stroke-linecap="round"/>
<path d="M648 482 C643 474 647 466.500 655 466.500 C662.5 466.500 666 474 663.5 480 C661.5 485 655.5 485.500 652.5 481.500" fill="none" stroke="#4a4a4a" stroke-width="3.4" stroke-linecap="round"/>
<path d="M648 482 C643 474 647 466.500 655 466.500 C662.5 466.500 666 474 663.5 480 C661.5 485 655.5 485.500 652.5 481.500" fill="none" stroke="#c4c4c4" stroke-width="2.0999999999999996" stroke-linecap="round"/>
<path d="M648 482 C643 474 647 466.500 655 466.500 C662.5 466.500 666 474 663.5 480 C661.5 485 655.5 485.500 652.5 481.500" fill="none" stroke="#efefef" stroke-width="0.94" stroke-linecap="round"/>
<circle cx="653" cy="475.5" r="3.9" fill="url(#gBall)" stroke="#5a5a5a" stroke-width="0.7"/>
<circle cx="641.5" cy="529.5" r="3.9" fill="url(#gBall)" stroke="#5a5a5a" stroke-width="0.7"/></g>
<path d="M683.2 248 C677.2 244 671.2 238 666.7 229.5 C665.7 238 671.2 247 683.2 248Z" fill="#7c7c7c" stroke="#3c3c3c" stroke-width="0.6"/>
<path d="M683.2 248 C680.2 240 676.7 230 672.7 223.5 C669.7 232 673.2 243 683.2 248Z" fill="#666" stroke="#3a3a3a" stroke-width="0.6"/>
<path d="M683.2 248 C689.2 244 695.2 238 699.7 229.5 C700.7 238 695.2 247 683.2 248Z" fill="#7c7c7c" stroke="#3c3c3c" stroke-width="0.6"/>
<path d="M683.2 248 C686.2 240 689.7 230 693.7 223.5 C696.7 232 693.2 243 683.2 248Z" fill="#666" stroke="#3a3a3a" stroke-width="0.6"/>
<path d="M683.2 217 C689.5 224 690 236 683.2 248 C676.4 236 676.9 224 683.2 217Z" fill="#5a5a5a" stroke="#333" stroke-width="0.6"/>
<path d="M683.2 222 C685.5 228 685.5 238 683.2 246 C680.9 238 680.9 228 683.2 222Z" fill="#7e7e7e"/>
<circle cx="683.2" cy="249" r="4.4" fill="url(#gBall)" stroke="#5a5a5a" stroke-width="0.7"/>
<circle cx="683.2" cy="258.5" r="2.6" fill="#e0e0e0" stroke="#6a6a6a" stroke-width="0.6"/>
<circle cx="683.2" cy="265" r="2.2" fill="#e0e0e0" stroke="#6a6a6a" stroke-width="0.6"/>
<circle cx="683.2" cy="270.5" r="2" fill="#e0e0e0" stroke="#6a6a6a" stroke-width="0.6"/>
<circle cx="683.2" cy="275.5" r="1.9" fill="#e0e0e0" stroke="#6a6a6a" stroke-width="0.6"/>
<circle cx="683.2" cy="280.5" r="1.9" fill="#e0e0e0" stroke="#6a6a6a" stroke-width="0.6"/>
<circle cx="683.2" cy="285.5" r="2" fill="#e0e0e0" stroke="#6a6a6a" stroke-width="0.6"/>
<circle cx="683.2" cy="290.5" r="2.2" fill="#e0e0e0" stroke="#6a6a6a" stroke-width="0.6"/>
<circle cx="683.2" cy="296" r="2.6" fill="#e0e0e0" stroke="#6a6a6a" stroke-width="0.6"/>
<path d="M683.2 298 C688 308 689.5 318 683.2 337 C677 318 678.4 308 683.2 298Z" fill="#a8a8a8" stroke="#444" stroke-width="0.8"/>
<path d="M683.2 304 C685.2 312 685.4 320 683.2 330 C681 320 681.2 312 683.2 304Z" fill="#e0e0e0"/>
<path d="M680 343H686.6L685 368H681.6Z" fill="#b0b0b0" stroke="#4a4a4a" stroke-width="0.7"/>
<path d="M681.8 368H684.8V372C689 370 690.5 371.5 690 373.5C687 374 685.6 376 685.4 380L685.6 420H681L681.2 380C681 376 679.6 374 676.6 373.5C676 371.5 677.5 370 681.8 372Z" fill="#a4a4a4" stroke="#4a4a4a" stroke-width="0.7"/>
<path d="M680.4 420H686.2L687.2 470H679.4Z" fill="url(#gCol)" stroke="#4a4a4a" stroke-width="0.6"/>
<path d="M679 450H687.6L689 458C694 459.5 700 460.5 705 461.5C703 465 697 466.5 690 467H676.6C669.5 466.5 663.5 465 661.5 461.5C666.5 460.5 672.5 459.5 677.6 458Z" fill="url(#gBulb)" stroke="#3c3c3c" stroke-width="0.7"/>
<path d="M678.6 467H688L688.6 476C689 479 691 481 694 482H672.6C675.6 481 677.6 479 678 476Z" fill="#6c6c6c" stroke="#3c3c3c" stroke-width="0.6"/>
<path d="M672 481.5H694.6C707 483 716.4 489 716.4 497 C716.4 502 715.6 504 714.6 506H652C651 504 650.2 502 650.2 497C650.2 489 659.6 483 672 481.5Z" fill="url(#gVase)" stroke="#333" stroke-width="0.7"/>
<path d="M664 484C660 490 659 498 660 506M674 482C672 490 672 498 672.6 506M692.6 482C694.6 490 694.6 498 694 506M702.6 484C706.6 490 707.6 498 706.6 506" stroke="#8a8a8a" stroke-width="0.8" fill="none" opacity="0.8"/>
<ellipse cx="662.5" cy="495" rx="4.2" ry="11.5" fill="#fff" opacity="0.22"/>
<ellipse cx="672.5" cy="495" rx="4.6" ry="11.5" fill="#fff" opacity="0.22"/>
<ellipse cx="683.3" cy="495" rx="5" ry="11.5" fill="#fff" opacity="0.22"/>
<ellipse cx="694" cy="495" rx="4.6" ry="11.5" fill="#fff" opacity="0.22"/>
<ellipse cx="704" cy="495" rx="4.2" ry="11.5" fill="#fff" opacity="0.22"/>
<rect x="652" y="505.3" width="62.6" height="12.6" fill="url(#gBand)"/>
<path d="M652.4 517.8H714.2C713 523 711 526 709.4 528.5H657.2C655.6 526 653.6 523 652.4 517.8Z" fill="url(#gVaseLow)"/>
<path d="M657.2 528H709.4C705 538 698 548 691 554H675.6C668.6 548 661.6 538 657.2 528Z" fill="url(#gVaseLow)" stroke="#333" stroke-width="0.7"/>
<path d="M663 530C667 540 672 548 677 553" stroke="#b8b8b8" stroke-width="3.0" fill="none" stroke-linecap="round"/>
<path d="M663 530C667 540 672 548 677 553" stroke="#ececec" stroke-width="1.20" fill="none" stroke-linecap="round"/>
<path d="M672.5 530C675 540 678 548 680.5 553" stroke="#b8b8b8" stroke-width="3.0" fill="none" stroke-linecap="round"/>
<path d="M672.5 530C675 540 678 548 680.5 553" stroke="#ececec" stroke-width="1.20" fill="none" stroke-linecap="round"/>
<path d="M683.3 530V553" stroke="#b8b8b8" stroke-width="3.6" fill="none" stroke-linecap="round"/>
<path d="M683.3 530V553" stroke="#ececec" stroke-width="1.44" fill="none" stroke-linecap="round"/>
<path d="M694 530C691.5 540 688.500 548 686 553" stroke="#b8b8b8" stroke-width="3.0" fill="none" stroke-linecap="round"/>
<path d="M694 530C691.5 540 688.500 548 686 553" stroke="#ececec" stroke-width="1.20" fill="none" stroke-linecap="round"/>
<path d="M703.5 530C699.5 540 694.5 548 689.5 553" stroke="#b8b8b8" stroke-width="3.0" fill="none" stroke-linecap="round"/>
<path d="M703.5 530C699.5 540 694.5 548 689.5 553" stroke="#ececec" stroke-width="1.20" fill="none" stroke-linecap="round"/>
<ellipse cx="683.3" cy="556.5" rx="8.6" ry="4" fill="url(#gBall)" stroke="#4a4a4a" stroke-width="0.7"/>
<rect x="584.6" y="560.2" width="197.4" height="86.6" fill="#2a2a2a"/>
<path d="M584.6 560.2H782L773.6 570.8H592.4Z" fill="url(#gFrT)"/>
<path d="M584.6 646.8H782L773.6 638.4H592.4Z" fill="url(#gFrB)"/>
<path d="M584.6 560.2L592.4 570.8V638.4L584.6 646.8Z" fill="url(#gFrL)"/>
<path d="M782 560.2L773.6 570.8V638.4L782 646.8Z" fill="url(#gFrR)"/>
<rect x="592.4" y="570.8" width="181.2" height="67.6" fill="#ffff80"/>
<path d="M621 578.6H745.6C747 586 753 592 763 603.6C753 616 747 622 745.6 629.4H621C619.6 622 613.6 616 603.6 603.6C613.6 592 619.6 586 621 578.6Z" fill="#fdfde0" stroke="#fffff0" stroke-width="2.4"/>
<g filter="url(#blurP)">
<path d="M621 578.6H745.6C747 586 753 592 763 603.6C753 616 747 622 745.6 629.4H621C619.6 622 613.6 616 603.6 603.6C613.6 592 619.6 586 621 578.6Z" fill="#3a3a3a" transform="translate(683.3 604) scale(1.0 1.0) translate(-683.3 -604)"/>
<path d="M621 578.6H745.6C747 586 753 592 763 603.6C753 616 747 622 745.6 629.4H621C619.6 622 613.6 616 603.6 603.6C613.6 592 619.6 586 621 578.6Z" fill="#101010" transform="translate(683.3 604) scale(0.985 0.95) translate(-683.3 -604)"/>
<path d="M621 578.6H745.6C747 586 753 592 763 603.6C753 616 747 622 745.6 629.4H621C619.6 622 613.6 616 603.6 603.6C613.6 592 619.6 586 621 578.6Z" fill="#1e1e1e" transform="translate(683.3 604) scale(0.955 0.86) translate(-683.3 -604)"/>
<path d="M621 578.6H745.6C747 586 753 592 763 603.6C753 616 747 622 745.6 629.4H621C619.6 622 613.6 616 603.6 603.6C613.6 592 619.6 586 621 578.6Z" fill="#3a3a3a" transform="translate(683.3 604) scale(0.93 0.78) translate(-683.3 -604)"/>
<path d="M621 578.6H745.6C747 586 753 592 763 603.6C753 616 747 622 745.6 629.4H621C619.6 622 613.6 616 603.6 603.6C613.6 592 619.6 586 621 578.6Z" fill="#545454" transform="translate(683.3 604) scale(0.9 0.7) translate(-683.3 -604)"/>
<path d="M621 578.6H745.6C747 586 753 592 763 603.6C753 616 747 622 745.6 629.4H621C619.6 622 613.6 616 603.6 603.6C613.6 592 619.6 586 621 578.6Z" fill="#6c6c6c" transform="translate(683.3 604) scale(0.86 0.62) translate(-683.3 -604)"/>
<path d="M621 578.6H745.6C747 586 753 592 763 603.6C753 616 747 622 745.6 629.4H621C619.6 622 613.6 616 603.6 603.6C613.6 592 619.6 586 621 578.6Z" fill="#828282" transform="translate(683.3 604) scale(0.8 0.54) translate(-683.3 -604)"/>
<path d="M621 578.6H745.6C747 586 753 592 763 603.6C753 616 747 622 745.6 629.4H621C619.6 622 613.6 616 603.6 603.6C613.6 592 619.6 586 621 578.6Z" fill="#989898" transform="translate(683.3 604) scale(0.72 0.46) translate(-683.3 -604)"/>
<path d="M621 578.6H745.6C747 586 753 592 763 603.6C753 616 747 622 745.6 629.4H621C619.6 622 613.6 616 603.6 603.6C613.6 592 619.6 586 621 578.6Z" fill="#aeaeae" transform="translate(683.3 604) scale(0.62 0.38) translate(-683.3 -604)"/>
<path d="M621 578.6H745.6C747 586 753 592 763 603.6C753 616 747 622 745.6 629.4H621C619.6 622 613.6 616 603.6 603.6C613.6 592 619.6 586 621 578.6Z" fill="#c6c6c6" transform="translate(683.3 604) scale(0.5 0.3) translate(-683.3 -604)"/>
<path d="M621 578.6H745.6C747 586 753 592 763 603.6C753 616 747 622 745.6 629.4H621C619.6 622 613.6 616 603.6 603.6C613.6 592 619.6 586 621 578.6Z" fill="#dcdcdc" transform="translate(683.3 604) scale(0.38 0.22) translate(-683.3 -604)"/>
<path d="M621 578.6H745.6C747 586 753 592 763 603.6C753 616 747 622 745.6 629.4H621C619.6 622 613.6 616 603.6 603.6C613.6 592 619.6 586 621 578.6Z" fill="#efefef" transform="translate(683.3 604) scale(0.27 0.14) translate(-683.3 -604)"/>
<path d="M621 578.6H745.6C747 586 753 592 763 603.6C753 616 747 622 745.6 629.4H621C619.6 622 613.6 616 603.6 603.6C613.6 592 619.6 586 621 578.6Z" fill="#ffffff" transform="translate(683.3 604) scale(0.16 0.07) translate(-683.3 -604)"/>
</g>
<g transform="translate(599.6,577.2) scale(1,1)"><path d="M0 0H16C15 8 8 15 0 16Z" fill="#303030" stroke="#fffff0" stroke-width="0.8"/><path d="M4.5 4.5H10.5C9.500 7.500 7.500 9.500 4.500 10.500Z" fill="#e0e0e0"/></g>
<g transform="translate(767,577.2) scale(-1,1)"><path d="M0 0H16C15 8 8 15 0 16Z" fill="#303030" stroke="#fffff0" stroke-width="0.8"/><path d="M4.5 4.5H10.5C9.500 7.500 7.500 9.500 4.500 10.500Z" fill="#e0e0e0"/></g>
<g transform="translate(599.6,630.6) scale(1,-1)"><path d="M0 0H16C15 8 8 15 0 16Z" fill="#303030" stroke="#fffff0" stroke-width="0.8"/><path d="M4.5 4.5H10.5C9.500 7.500 7.500 9.500 4.500 10.500Z" fill="#e0e0e0"/></g>
<g transform="translate(767,630.6) scale(-1,-1)"><path d="M0 0H16C15 8 8 15 0 16Z" fill="#303030" stroke="#fffff0" stroke-width="0.8"/><path d="M4.5 4.5H10.5C9.500 7.500 7.500 9.500 4.500 10.500Z" fill="#e0e0e0"/></g>
</svg>
<!-- VIEW TOOLBAR ICONS -->
<svg style="left:0;top:0" width="1366" height="100" viewBox="0 0 1366 100">
<defs>
<radialGradient id="zLens" cx="0.4" cy="0.35" r="0.7"><stop offset="0" stop-color="#f4fcff"/><stop offset="1" stop-color="#b8dcf0"/></radialGradient>
<g id="zoomi"><path d="M5 5.200L7 7.200" stroke="#c8a070" stroke-width="4.200" stroke-linecap="round"/><circle cx="0" cy="0" r="6.200" fill="url(#zLens)" stroke="#86a6c0" stroke-width="1.400"/></g>
</defs>
<use href="#zoomi" transform="translate(314.400 57.200)"/><path d="M310.900 57.200H317.900M314.400 53.700V60.700" stroke="#2a5a98" stroke-width="1.500"/>
<use href="#zoomi" transform="translate(337.500 57.200)"/><path d="M334 57.200H341" stroke="#2a5a98" stroke-width="1.500"/>
<use href="#zoomi" transform="translate(361 57.200)"/><path d="M363.600 58.500A2.700 2.700 0 1 1 361 54.500M359 52.600L361 54.600L359 56.600" stroke="#6a9810" stroke-width="1.400" fill="none"/>
<path d="M377.500 49V69" stroke="#b4b4b4" stroke-width="1"/><path d="M378.500 49V69" stroke="#fcfcfc" stroke-width="1"/>
<use href="#zoomi" transform="translate(391.700 57.200)"/><text x="391.700" y="59.600" font-size="6.500" font-weight="bold" text-anchor="middle" fill="#5a88b8" font-family="Liberation Sans, Arial, sans-serif">1:1</text>
<use href="#zoomi" transform="translate(414.400 57.200)"/><rect x="411.400" y="54.700" width="6" height="5" fill="none" stroke="#4a78b0" stroke-width="1.300"/>
<g transform="translate(438.500 57.200)"><circle cx="0" cy="0" r="6.300" fill="#a8a8a8"/><path d="M4 4.500L7.500 7.500" stroke="#a8a8a8" stroke-width="4.600" stroke-linecap="round"/><circle cx="-3.500" cy="3" r="3.500" fill="#a8a8a8"/><circle cx="4" cy="-3" r="3.200" fill="#a8a8a8"/></g>
<path d="M454.500 49V69" stroke="#b4b4b4" stroke-width="1"/><path d="M455.500 49V69" stroke="#fcfcfc" stroke-width="1"/>
<!-- toggle buttons -->
<rect x="459.500" y="48.500" width="22" height="20.500" fill="#f8f8f8" stroke="none"/><path d="M459.500 69V48.500H481.500" fill="none" stroke="#8a8a8a" stroke-width="1"/>
<rect x="482.500" y="48.500" width="21.500" height="20.500" fill="#f8f8f8" stroke="none"/><path d="M482.500 69V48.500H504" fill="none" stroke="#8a8a8a" stroke-width="1"/>
<path d="M466 52.500H474M466 55.500H470M466 58.500H470M466 61.500H470M466 64.500H474M474 52.500V64.500" stroke="#111" stroke-width="1.200" stroke-dasharray="1.500 1" fill="none"/><path d="M479 56.500H474.500V54L469.500 58.500L474.500 63V60.500H479Z" fill="#444" stroke="#000" stroke-width="0.800"/>
<path d="M490 52.500H498M494 55.500H498M494 58.500H498M494 61.500H498M490 64.500H498M498 52.500V64.500" stroke="#111" stroke-width="1.200" stroke-dasharray="1.500 1" fill="none"/><path d="M486.500 56.500H491V54L496 58.500L491 63V60.500H486.500Z" fill="#444" stroke="#000" stroke-width="0.800"/>
<!-- blue arrow lens -->
<path d="M508.500 58L517 52.500L517 63.500Z" fill="#5878c8"/><circle cx="518.500" cy="57" r="5" fill="#c4d4ec" stroke="#8aa4cc" stroke-width="1.200"/><path d="M521 60.500L524.500 64" stroke="#c89868" stroke-width="2.600" stroke-linecap="round"/>
<path d="M531.500 49V69" stroke="#b4b4b4" stroke-width="1"/><path d="M532.500 49V69" stroke="#fcfcfc" stroke-width="1"/>
<!-- slider -->
<path d="M544 58.800H617.500" stroke="#8c8c8c" stroke-width="1.800"/><path d="M544 60.300H617.500" stroke="#fdfdfd" stroke-width="1"/>
<path d="M619.500 50.500H627.500V65.500L624 69.500H619.500Z" fill="#ececec" stroke="none"/><path d="M627.500 50.500V65.500L624 69.500" fill="none" stroke="#6e6e6e" stroke-width="1.400"/><path d="M619.500 69.500V50.500H627" fill="none" stroke="#fdfdfd" stroke-width="1"/>
</svg>
<!-- RIGHT PANEL -->
<div class="abs" id="rightpanel"></div>
<div class="abs rbar" style="top:45px"><b>Vectors</b><i></i></div>
<div class="abs rbar" style="top:76px"><b>Bitmaps</b><i></i></div>
<div class="abs rbar" style="top:107px"><b>Reliefs</b><i></i></div>
<!-- VIEW EXTRAS: scrollbars, palette, status -->
<div class="abs" style="left:1070px;top:75px;width:18px;height:20px;background:#f4f4f4;border-left:1px solid #fff;border-top:1px solid #fff;border-right:1px solid #6e6e6e;border-bottom:1px solid #6e6e6e;box-sizing:border-box"></div>
<svg style="left:1070px;top:75px" width="18" height="20"><path d="M5 8H8M10 8H13" stroke="#111" stroke-width="1.3"/><path d="M4.5 10.5H13.5L9 15Z" fill="#111"/></svg>
<div class="abs sb" style="left:1072px;top:112px;width:15px;height:555px"></div>
<svg style="left:1071px;top:95px" width="17" height="17"><path class="chev" d="M4.5 10.5L8.5 6.5L12.5 10.5"/></svg>
<svg style="left:1071px;top:668px" width="17" height="17"><path class="chev" d="M4.5 6.5L8.5 10.5L12.5 6.5"/></svg>
<div class="abs sb" style="left:315px;top:686px;width:739px;height:15px"></div>
<svg style="left:298px;top:685px" width="17" height="17"><path class="chev" d="M10.5 4.5L6.5 8.5L10.5 12.5"/></svg>
<svg style="left:1054px;top:685px" width="17" height="17"><path class="chev" d="M6.5 4.5L10.5 8.5L6.5 12.5"/></svg>
<div class="abs" style="left:278px;top:685px;width:20px;height:17px;background:#f4f4f4;border-left:1px solid #fff;border-top:1px solid #fff;border-right:1px solid #6e6e6e;border-bottom:1px solid #6e6e6e;box-sizing:border-box"></div>
<svg style="left:278px;top:685px" width="20" height="17"><path d="M7 4V13" stroke="#111" stroke-width="1.2" stroke-dasharray="2 1.5"/><path d="M10 4L15 8.5L10 13Z" fill="#111"/></svg>
<div class="abs" style="left:277px;top:706px;width:811px;height:42px;border-left:1px solid #a6a6a6;border-top:1px solid #a6a6a6;border-bottom:1px solid #fcfcfc;box-sizing:border-box"></div>
<div class="abs" style="left:298px;top:723px;width:25px;height:20px;background:#000;box-shadow:1px 1px 0 #888"></div>
<div class="abs" style="left:283px;top:711px;width:25px;height:20px;background:#fff;border:1px solid #222;box-sizing:border-box;box-shadow:1px 1px 0 #999"></div>
<svg style="left:310px;top:710px" width="14" height="12"><rect x="1.5" y="2" width="7" height="4.6" rx="2.2" fill="none" stroke="#111" stroke-width="1.25"/><rect x="4.5" y="4.6" width="7.6" height="5" rx="2.4" fill="none" stroke="#111" stroke-width="1.25"/></svg>
<div class="abs sw" style="left:333px;background:#ffffff"></div>
<div class="abs sw" style="left:368px;background:#000000"></div>
<div class="abs sw" style="left:403px;background:#00ffff"></div>
<div class="abs sw" style="left:438px;background:#3040d8"></div>
<div class="abs sw" style="left:473px;background:#58b850"></div>
<div class="abs sw" style="left:508px;background:#d81020"></div>
<div class="abs sw" style="left:543px;background:#a030e0"></div>
<div class="abs sw" style="left:578px;background:#ffff80"></div>
<div class="abs sw" style="left:613px;background:#a89838"></div>
<div class="abs sw" style="left:648px;background:#ffc818"></div>
<div class="abs sw" style="left:683px;background:#060606"></div>
<div class="abs sw" style="left:718px;background:#060606"></div>
<div class="abs sw" style="left:753px;background:#060606"></div>
<div class="abs sw" style="left:788px;background:#060606"></div>
<div class="abs sw" style="left:823px;background:#060606"></div>
<div class="abs sw" style="left:858px;background:#060606"></div>
<div class="abs sw" style="left:893px;background:#060606"></div>
<div class="abs sw" style="left:928px;background:#060606"></div>
<div class="abs sw" style="left:963px;background:#060606"></div>
<div class="abs sw" style="left:998px;background:#060606"></div>
<div class="abs sw" style="left:1033px;background:#060606"></div>
<svg style="left:1071px;top:708px" width="17" height="17"><path class="chev" d="M4.5 10.5L8.5 6.5L12.5 10.5"/></svg>
<svg style="left:1071px;top:730px" width="17" height="17"><path class="chev" d="M4.5 6.5L8.5 10.5L12.5 6.5"/></svg>
<div class="abs" style="left:0;top:747px;width:275px;height:1px;background:#9a9a9a"></div>
<div class="abs" style="left:1090px;top:747px;width:276px;height:1px;background:#9a9a9a"></div>
<div class="abs stbox" style="left:1023px;width:66px">X: 1120.900</div>
<div class="abs stbox" style="left:1092px;width:66px">Y: -578.236</div>
<div class="abs stbox" style="left:1161px;width:60px"></div>
<div class="abs stbox" style="left:1224px;width:70px"></div>
<div class="abs stbox" style="left:1297px;width:69px"></div>
<svg style="left:0;top:0" width="1366" height="768" viewBox="0 0 1366 768" font-family="Liberation Sans, Arial, sans-serif" font-size="12">
<defs><filter id="nz" x="0" y="0" width="100%" height="100%"><feTurbulence type="fractalNoise" baseFrequency="0.35" numOctaves="2" seed="3" result="n"/><feColorMatrix in="n" type="matrix" values="0 0 0 0 0.86  0 0 0 0 0.86  0 0 0 0 0.86  0.9 0.9 0 0 -0.35"/><feComposite in2="SourceGraphic" operator="in"/></filter></defs>
<rect x="2" y="721" width="269" height="26" fill="#d8d8d8"/>
<rect x="2" y="721" width="269" height="26" fill="#eee" filter="url(#nz)" opacity="0.7"/>
<path d="M2 721H62V741C62 744 60 746 57 746H2Z" fill="#f0f0f0"/>
<path d="M62.500 721.5H128.500V741C128.500 744 127 745.500 124 745.500H67C64 745.500 62.500 744 62.500 741Z" fill="#f2f2f2" stroke="#b4b4b4" stroke-width="1"/>
<path d="M128.500 721.500H271" stroke="#9a9a9a" stroke-width="1"/><path d="M1191.500 721.500H1366" stroke="#9a9a9a" stroke-width="1"/><path d="M1365.500 43V721" stroke="#8a8a8a" stroke-width="1"/>
<text x="8.600" y="737" fill="#111" textLength="46.400" lengthAdjust="spacingAndGlyphs">Assistant</text>
<text x="70.600" y="738" fill="#111" textLength="52" lengthAdjust="spacingAndGlyphs">Toolpaths</text>
<rect x="1095" y="721" width="271" height="26" fill="#d8d8d8"/>
<rect x="1095" y="721" width="271" height="26" fill="#eee" filter="url(#nz)" opacity="0.7"/>
<path d="M1095 721H1143.500V741C1143.500 744 1141 746 1138 746H1095Z" fill="#f0f0f0"/>
<path d="M1143.500 721.500H1191V741C1191 744 1189.500 745.500 1186.500 745.500H1148C1145 745.500 1143.500 744 1143.500 741Z" fill="#f2f2f2" stroke="#b4b4b4" stroke-width="1"/>
<text x="1103.700" y="737" fill="#111" textLength="32.200" lengthAdjust="spacingAndGlyphs">Layers</text>
<text x="1151.500" y="738" fill="#111" textLength="34.200" lengthAdjust="spacingAndGlyphs">Add In</text>
</svg>
</body>
</html>
